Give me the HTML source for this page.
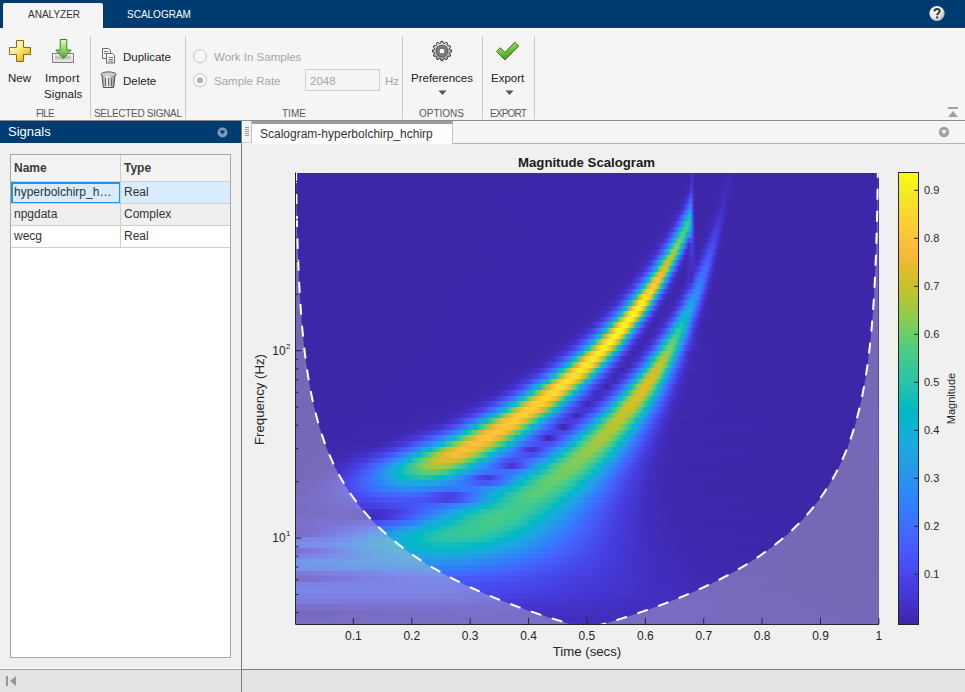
<!DOCTYPE html>
<html><head><meta charset="utf-8">
<style>
*{box-sizing:border-box;margin:0;padding:0}
html,body{width:965px;height:692px;overflow:hidden;background:#f0f0f0;font-family:"Liberation Sans",sans-serif;color:#333}
.a{position:absolute;white-space:nowrap}
.tt{font-size:10px;line-height:10px;letter-spacing:0}
.lbl{font-size:11.5px;line-height:12px;color:#222}
.sec{font-size:10px;line-height:10px;color:#5a5a5a}
.dis{color:#a6a6a6}
.sep{position:absolute;width:1px;background:#c9c9c9;top:36px;height:83px}
#scal div{position:absolute;left:0;width:583px}
.tk{font-size:12px;line-height:12px;color:#262626}
.cb{font-size:11px;line-height:11px;color:#262626}
.cell{position:absolute;font-size:12px;line-height:12px;color:#333}
</style></head><body>
<!-- top tab bar -->
<div class="a" style="left:0;top:0;width:965px;height:28px;background:#003c71"></div>
<div class="a" style="left:3px;top:3px;width:100px;height:25px;background:#f5f5f5;border-radius:2px 2px 0 0"></div>
<div class="a tt" style="left:28px;top:10px;color:#333">ANALYZER</div>
<div class="a tt" style="left:127px;top:10px;color:#fff">SCALOGRAM</div>
<svg class="a" style="left:928px;top:5px" width="18" height="18" viewBox="0 0 18 18">
<defs><radialGradient id="hg" cx="35%" cy="30%" r="75%"><stop offset="0" stop-color="#fff"/><stop offset="0.6" stop-color="#e8e8e8"/><stop offset="1" stop-color="#b8b8b8"/></radialGradient></defs>
<circle cx="9" cy="8.5" r="7.6" fill="url(#hg)"/>
<path d="M6.4 6.6C6.4 4.9 7.6 4 9 4C10.5 4 11.6 4.9 11.6 6.3C11.6 7.5 10.9 8 10.1 8.5C9.4 8.9 9.1 9.3 9.1 10.3" fill="none" stroke="#333" stroke-width="1.9"/><rect x="8.1" y="11.4" width="2" height="2" fill="#3a3f6a"/>
</svg>

<!-- toolstrip -->
<div class="a" style="left:0;top:28px;width:965px;height:92px;background:#f5f5f5"></div>
<!-- New icon -->
<svg class="a" style="left:8px;top:39px" width="24" height="24" viewBox="0 0 24 24">
<defs><linearGradient id="pg" x1="0.1" y1="0.2" x2="0.8" y2="1"><stop offset="0" stop-color="#fffbe2"/><stop offset="0.35" stop-color="#fbeb8a"/><stop offset="0.7" stop-color="#f2cc3a"/><stop offset="1" stop-color="#d9a21a"/></linearGradient></defs>
<path d="M8.5 1.5h7v7h7v7h-7v7h-7v-7h-7v-7h7z" fill="url(#pg)" stroke="#8f6a1a" stroke-width="1"/>
</svg>
<div class="a lbl" style="left:8px;top:72px">New</div>
<!-- Import icon -->
<svg class="a" style="left:51px;top:38px" width="25" height="26" viewBox="0 0 25 26">
<defs><linearGradient id="ig" x1="0" y1="0" x2="0" y2="1"><stop offset="0" stop-color="#e4f7cc"/><stop offset="0.5" stop-color="#9ad46a"/><stop offset="1" stop-color="#4aa02a"/></linearGradient>
<linearGradient id="tg" x1="0" y1="0" x2="0" y2="1"><stop offset="0" stop-color="#f6f6f6"/><stop offset="1" stop-color="#e0e0e0"/></linearGradient></defs>
<path d="M1.5 15.5h21v9h-21z" fill="url(#tg)" stroke="#7c7c7c"/>
<path d="M4 17.5h16v4h-16z" fill="#c4c4c4"/>
<path d="M9.2 1.5h6.6v10.5h4.4l-7.7 8.6l-7.7-8.6h4.4z" fill="url(#ig)" stroke="#3b8a22" stroke-width="1"/>
</svg>
<div class="a lbl" style="left:45px;top:72px;letter-spacing:.35px">Import</div>
<div class="a lbl" style="left:44px;top:88px;letter-spacing:.1px">Signals</div>
<div class="a sec" style="left:36px;top:109px;letter-spacing:-.8px">FILE</div>
<div class="sep" style="left:90px"></div>
<!-- Duplicate icon -->
<svg class="a" style="left:101px;top:47px" width="15" height="17" viewBox="0 0 15 17">
<path d="M1.5 1.5h6l2 2v8h-8z" fill="#f4f4f4" stroke="#6a6a6a"/>
<path d="M5.5 6.5h6l2 2v7.5h-8z" fill="#f8f8f8" stroke="#6a6a6a"/>
<path d="M3 4.5h4M3 6.5h2M7.5 10.5h4.5M7.5 12.5h4.5M7.5 14.2h4.5" stroke="#7a7a7a" stroke-width="1"/>
</svg>
<div class="a lbl" style="left:123px;top:51px">Duplicate</div>
<!-- Delete icon -->
<svg class="a" style="left:100px;top:71px" width="17" height="18" viewBox="0 0 17 18">
<defs><linearGradient id="dg" x1="0" y1="0" x2="1" y2="0"><stop offset="0" stop-color="#9a9a9a"/><stop offset="0.4" stop-color="#f2f2f2"/><stop offset="1" stop-color="#8a8a8a"/></linearGradient></defs>
<ellipse cx="8.5" cy="3.5" rx="7.5" ry="2.6" fill="#d0d0d0" stroke="#555"/>
<path d="M2 4.5l1.3 12h10.4l1.3-12" fill="url(#dg)" stroke="#555"/>
<path d="M5.5 7v8M8.5 7v8M11.5 7v8" stroke="#666" stroke-width="1"/>
</svg>
<div class="a lbl" style="left:123px;top:75px">Delete</div>
<div class="a sec" style="left:94px;top:109px;letter-spacing:-.3px">SELECTED SIGNAL</div>
<div class="sep" style="left:185px"></div>
<!-- TIME section -->
<svg class="a" style="left:192px;top:48px" width="16" height="40" viewBox="0 0 16 40">
<circle cx="8" cy="8.2" r="6.5" fill="#f8f8f8" stroke="#c4c4c4"/>
<circle cx="8" cy="32.2" r="6.5" fill="#f8f8f8" stroke="#c4c4c4"/>
<circle cx="8" cy="32.2" r="3" fill="#b0b0b0"/>
</svg>
<div class="a lbl dis" style="left:214px;top:51px">Work In Samples</div>
<div class="a lbl dis" style="left:214px;top:75px">Sample Rate</div>
<div class="a" style="left:305px;top:69px;width:75px;height:22px;border:1px solid #cfcfcf;background:#f5f5f5"></div>
<div class="a lbl dis" style="left:310px;top:75px">2048</div>
<div class="a lbl dis" style="left:385px;top:75px">Hz</div>
<div class="a sec" style="left:282px;top:109px">TIME</div>
<div class="sep" style="left:402px"></div>
<!-- Preferences -->
<svg class="a" style="left:431px;top:40px" width="22" height="22" viewBox="0 0 22 22">
<defs><radialGradient id="gg" cx="50%" cy="50%" r="50%"><stop offset="0.35" stop-color="#2e2e2e"/><stop offset="0.65" stop-color="#8a8a8a"/><stop offset="1" stop-color="#505050"/></radialGradient>
<linearGradient id="gb" x1="0" y1="0" x2="0" y2="1"><stop offset="0" stop-color="#e6e6e6"/><stop offset="1" stop-color="#9c9c9c"/></linearGradient></defs>
<g transform="translate(11 11)">
<path d="M9.55 -1.00 L9.55 1.00 L7.89 1.33 L7.50 2.79 L8.77 3.90 L7.77 5.64 L6.16 5.10 L5.10 6.16 L5.64 7.77 L3.90 8.77 L2.79 7.50 L1.33 7.89 L1.00 9.55 L-1.00 9.55 L-1.33 7.89 L-2.79 7.50 L-3.90 8.77 L-5.64 7.77 L-5.10 6.16 L-6.16 5.10 L-7.77 5.64 L-8.77 3.90 L-7.50 2.79 L-7.89 1.33 L-9.55 1.00 L-9.55 -1.00 L-7.89 -1.33 L-7.50 -2.79 L-8.77 -3.90 L-7.77 -5.64 L-6.16 -5.10 L-5.10 -6.16 L-5.64 -7.77 L-3.90 -8.77 L-2.79 -7.50 L-1.33 -7.89 L-1.00 -9.55 L1.00 -9.55 L1.33 -7.89 L2.79 -7.50 L3.90 -8.77 L5.64 -7.77 L5.10 -6.16 L6.16 -5.10 L7.77 -5.64 L8.77 -3.90 L7.50 -2.79 L7.89 -1.33Z" fill="url(#gb)" stroke="#333" stroke-width="1"/>
<circle r="6.3" fill="url(#gg)"/>
<circle r="2.6" fill="#f6f6f6"/>
</g></svg>
<div class="a lbl" style="left:411px;top:72px">Preferences</div>
<svg class="a" style="left:438px;top:90px" width="9" height="6" viewBox="0 0 9 6"><path d="M0.5 0.5h8l-4 4.5z" fill="#555"/></svg>
<div class="a sec" style="left:419px;top:109px">OPTIONS</div>
<div class="sep" style="left:482px"></div>
<!-- Export -->
<svg class="a" style="left:495px;top:40px" width="26" height="22" viewBox="0 0 26 22">
<defs><linearGradient id="cg" x1="0" y1="0" x2="0.4" y2="1"><stop offset="0" stop-color="#c4eb98"/><stop offset="0.5" stop-color="#7cc747"/><stop offset="1" stop-color="#3f9a1c"/></linearGradient></defs>
<path d="M1.5 11.5l3.8-3.8 4.7 4.7 9.8-10.2 4 3.8-13.8 14z" fill="url(#cg)" stroke="#2e6b18" stroke-width="0.9" stroke-linejoin="round"/>
</svg>
<div class="a lbl" style="left:491px;top:72px">Export</div>
<svg class="a" style="left:505px;top:90px" width="9" height="6" viewBox="0 0 9 6"><path d="M0.5 0.5h8l-4 4.5z" fill="#555"/></svg>
<div class="a sec" style="left:490px;top:109px;letter-spacing:-.8px">EXPORT</div>
<div class="sep" style="left:534px"></div>
<!-- collapse -->
<svg class="a" style="left:947px;top:106px" width="12" height="12" viewBox="0 0 12 12"><rect x="1" y="1" width="10" height="2" fill="#a0a0a0"/><path d="M1 11h10l-5-6z" fill="#a0a0a0"/></svg>
<div class="a" style="left:0;top:120px;width:965px;height:1px;background:#8c8c8c"></div>

<!-- left panel -->
<div class="a" style="left:0;top:121px;width:241px;height:22px;background:#003c71"></div>
<div class="a" style="left:8px;top:125px;font-size:13px;line-height:14px;color:#fff">Signals</div>
<svg class="a" style="left:217px;top:127px" width="11" height="11" viewBox="0 0 11 11"><circle cx="5.5" cy="5.5" r="5" fill="#7f9cba"/><path d="M2.7 3.5h5.6l-2.8 4.2z" fill="#003c71"/></svg>
<!-- table -->
<div class="a" style="left:10px;top:154px;width:221px;height:504px;background:#fff;border:1px solid #a8a8a8"></div>
<div class="a" style="left:11px;top:155px;width:219px;height:26px;background:#f3f3f3"></div>
<div class="a" style="left:11px;top:181px;width:219px;height:1px;background:#cfcfcf"></div>
<div class="a" style="left:11px;top:182px;width:219px;height:21px;background:#d9ecfb"></div>
<div class="a" style="left:11px;top:182px;width:110px;height:22px;border:2px solid #2391ee"></div>
<div class="a" style="left:11px;top:203px;width:219px;height:1px;background:#cfcfcf"></div>
<div class="a" style="left:11px;top:204px;width:219px;height:21px;background:#efefef"></div>
<div class="a" style="left:11px;top:225px;width:219px;height:1px;background:#cfcfcf"></div>
<div class="a" style="left:11px;top:247px;width:219px;height:1px;background:#cfcfcf"></div>
<div class="a" style="left:120px;top:155px;width:1px;height:92px;background:#cfcfcf"></div>
<div class="cell" style="left:14px;top:162px;font-weight:bold;color:#3a3a3a">Name</div>
<div class="cell" style="left:124px;top:162px;font-weight:bold;color:#3a3a3a">Type</div>
<div class="cell" style="left:14px;top:186px">hyperbolchirp_h…</div>
<div class="cell" style="left:124px;top:186px">Real</div>
<div class="cell" style="left:14px;top:208px">npgdata</div>
<div class="cell" style="left:124px;top:208px">Complex</div>
<div class="cell" style="left:14px;top:230px">wecg</div>
<div class="cell" style="left:124px;top:230px">Real</div>
<div class="a" style="left:241px;top:121px;width:1px;height:571px;background:#7a7a7a"></div>

<!-- doc tab bar -->
<div class="a" style="left:242px;top:121px;width:723px;height:22px;background:#f5f5f5"></div>
<div class="a" style="left:242px;top:121px;width:10px;height:22px;background:#f2f2f2;border-left:1px solid #fff;border-right:1px solid #c2c2c2;border-bottom:1px solid #d0d0d0"></div>
<svg class="a" style="left:244px;top:126px" width="6" height="11" viewBox="0 0 6 11"><path d="M1 1.5h4M1 3.5h4M1 5.5h4M1 7.5h4M1 9.5h4" stroke="#9a9a9a" stroke-width="1"/></svg>
<div class="a" style="left:252px;top:121px;width:201px;height:23px;background:#fdfdfd;border-top:3px solid #9c9c9c;border-right:1px solid #c4c4c4"></div>
<div class="a" style="left:260px;top:128px;font-size:12px;line-height:12px;color:#333">Scalogram-hyperbolchirp_hchirp</div>
<div class="a" style="left:453px;top:143px;width:512px;height:1px;background:#b4b4b4"></div>
<svg class="a" style="left:938px;top:126px" width="12" height="12" viewBox="0 0 12 12"><circle cx="6" cy="6" r="5.2" fill="#a2a2a2"/><path d="M3 4.2h6l-3 4z" fill="#f5f5f5"/></svg>

<!-- plot -->
<div class="a" style="left:518px;top:156px;font-size:13.2px;line-height:14px;font-weight:bold;color:#1a1a1a">Magnitude Scalogram</div>
<div class="a" id="scal" style="left:296px;top:173px;width:583px;height:451px;background:#3e26a8;overflow:hidden">
<div style="top:0px;height:3px;background:linear-gradient(90deg,#3e26a8 0,#3e27a9 394px,#412dbc 395px,#4332c8 396px,#402bb6 397px,#3e27aa 398px,#3e27ab 429px,#402ab4 434px,#3e27a9 438px,#3e26a8 582px)"></div>
<div style="top:3px;height:5px;background:linear-gradient(90deg,#3e26a8 0,#3e27ab 394px,#4331c6 395px,#4435d1 396px,#402cb8 397px,#3e27a9 398px,#3e27aa 427px,#402bb6 433px,#3e26a9 438px,#3e26a8 582px)"></div>
<div style="top:8px;height:6px;background:linear-gradient(90deg,#3e26a8 0,#3e27aa 390px,#3f28ae 393px,#402ab3 394px,#4537d5 395px,#463ada 396px,#412dbc 397px,#3e27ab 398px,#3e27aa 425px,#402bb8 432px,#3e27a9 437px,#3e26a8 582px)"></div>
<div style="top:14px;height:6px;background:linear-gradient(90deg,#3e26a8 0,#3e27ab 388px,#402bb8 393px,#4331c7 394px,#4742e6 395px,#4740e4 396px,#422fc1 397px,#3e27ac 398px,#3e26a8 402px,#3e27ab 424px,#412cbb 431px,#3e27aa 436px,#3e26a8 582px)"></div>
<div style="top:20px;height:5px;background:linear-gradient(90deg,#3e26a8 0,#3e27ab 385px,#402ab3 389px,#4330c5 392px,#4434cf 393px,#4741e6 394px,#4854f5 395px,#484aed 396px,#4332c8 397px,#3f28ae 398px,#3e26a8 400px,#3e27ab 422px,#422ebe 429px,#402ab5 432px,#3e27aa 435px,#3e26a8 582px)"></div>
<div style="top:25px;height:6px;background:linear-gradient(90deg,#3e26a8 0,#3e27ab 382px,#402bb6 387px,#4433cc 390px,#4740e4 392px,#484cf0 393px,#4660fb 394px,#416bfe 395px,#4855f6 396px,#4435d1 397px,#3f29b1 398px,#3e27a9 399px,#3e27aa 420px,#412cb9 425px,#4230c3 428px,#402bb6 431px,#3e27aa 434px,#3e26a8 582px)"></div>
<div style="top:31px;height:6px;background:linear-gradient(90deg,#3e26a8 0,#3e27ab 379px,#402bb6 384px,#4332ca 387px,#463ee1 389px,#4854f5 391px,#4563fd 392px,#3677fe 393px,#2d89f5 394px,#2e86f7 395px,#4661fc 396px,#463ada 397px,#402ab5 398px,#3e27aa 399px,#3e27aa 418px,#402ab5 422px,#4331c7 426px,#4330c4 428px,#3e28ac 432px,#3e26a8 439px,#3e26a8 582px)"></div>
<div style="top:37px;height:5px;background:linear-gradient(90deg,#3e26a8 0,#3e27ab 376px,#402bb6 381px,#4332c9 384px,#463ddf 386px,#465ffb 389px,#3d71ff 390px,#2e84f8 391px,#1ea7e1 393px,#19acdc 394px,#259be8 395px,#406dfe 396px,#473fe3 397px,#412cb9 398px,#3e27ab 399px,#3e27aa 415px,#3f29b1 419px,#4433cd 425px,#4331c8 427px,#3e28ad 431px,#3e26a8 437px,#3e26a8 582px)"></div>
<div style="top:42px;height:6px;background:linear-gradient(90deg,#3e26a8 0,#3e27aa 372px,#402ab3 377px,#422fc1 380px,#463ddf 383px,#465efb 386px,#3f6eff 387px,#2f82fa 388px,#1fa6e2 390px,#0ab4d1 391px,#0abdbd 392px,#1fc0b2 393px,#0bbdbd 394px,#1ea8e0 395px,#3876fe 396px,#4745e9 397px,#422ebf 398px,#3f28ad 399px,#3e26a8 402px,#3e27ac 415px,#412cba 419px,#4536d3 423px,#4435d1 425px,#3f28ad 430px,#3e26a8 436px,#3e26a8 582px)"></div>
<div style="top:48px;height:6px;background:linear-gradient(90deg,#3e26a8 0,#3e27ab 369px,#402ab4 374px,#4230c3 377px,#463de0 380px,#465efb 383px,#3f6eff 384px,#2f81fa 385px,#20a5e2 387px,#0bb3d2 388px,#0cbdbc 389px,#2bc3a8 390px,#36c899 391px,#3ac993 392px,#33c69d 393px,#13beb9 394px,#1ea7e1 395px,#3678fd 396px,#4848ec 397px,#4330c4 398px,#3f28af 399px,#3e26a8 401px,#3e27ac 413px,#412cbb 417px,#4538d7 421px,#4639da 423px,#4433cd 425px,#3f29b2 428px,#3e27a9 431px,#3e26a8 582px)"></div>
<div style="top:54px;height:5px;background:linear-gradient(90deg,#3e26a8 0,#3e27aa 365px,#402ab5 371px,#4330c5 374px,#473fe2 377px,#4660fb 380px,#3d70ff 381px,#2f83f9 382px,#1fa6e2 384px,#08b4d1 385px,#11beba 386px,#2ec5a4 387px,#3cc991 388px,#48cb86 389px,#47cb87 390px,#39c895 391px,#28c3aa 392px,#05bbc1 393px,#15afd9 394px,#2798ea 395px,#3d70ff 396px,#4849ed 397px,#4332c9 398px,#3f29b2 399px,#3e27aa 400px,#3e27ab 410px,#402bb6 414px,#463ddf 420px,#463cdf 422px,#4434cf 424px,#3f29b2 427px,#3e27a9 430px,#3e26a8 582px)"></div>
<div style="top:59px;height:6px;background:linear-gradient(90deg,#3e26a8 0,#3e27ab 362px,#402bb7 368px,#4332c9 371px,#4742e6 374px,#4563fd 377px,#3a74fe 378px,#2e86f7 379px,#1da9e0 381px,#03b7cc 382px,#33c69d 384px,#47cb87 385px,#59cc78 386px,#5ccc75 387px,#4ecc81 388px,#1bc0b4 390px,#0ab4d2 391px,#23a0e5 392px,#2c8ef1 393px,#2e83f9 394px,#3677fe 395px,#4561fc 396px,#4746ea 397px,#4433cb 398px,#402ab4 399px,#3e27ab 400px,#3e27aa 407px,#3f29b2 411px,#4330c5 414px,#463cdf 417px,#4742e7 419px,#473fe2 421px,#4435d0 423px,#412cb9 425px,#3f28ad 427px,#3e26a8 434px,#3e26a8 582px)"></div>
<div style="top:65px;height:5px;background:linear-gradient(90deg,#3e26a8 0,#3e27ab 358px,#402bb6 364px,#4330c5 367px,#463de0 370px,#475bf9 373px,#4269fe 374px,#347afd 375px,#249de6 377px,#18addb 378px,#02bac5 379px,#26c2ac 380px,#3bc993 381px,#57cc7a 382px,#6dcd68 383px,#73cd62 384px,#68cd6b 385px,#4dcb82 386px,#31c6a0 387px,#08bcbf 388px,#19acdc 389px,#3479fd 391px,#465dfa 392px,#484aee 393px,#484bef 394px,#4853f4 395px,#484ff2 396px,#4740e4 397px,#4432cb 398px,#402bb6 399px,#3e28ad 400px,#3e27a9 403px,#3f29b0 408px,#422ebf 411px,#473fe2 415px,#4747eb 417px,#4746ea 419px,#463bdc 421px,#412cb8 424px,#3e28ad 426px,#3e26a8 434px,#3e26a8 582px)"></div>
<div style="top:70px;height:6px;background:linear-gradient(90deg,#3e26a8 0,#3e27ab 354px,#402ab5 360px,#4230c3 363px,#463bdd 366px,#4755f6 369px,#4561fc 370px,#3d71ff 371px,#2f82f9 372px,#20a4e3 374px,#0cb3d2 375px,#0fbeba 376px,#31c6a0 377px,#4bcb84 378px,#6ccd68 379px,#85cb56 380px,#8dcb4f 381px,#84cc56 382px,#68cd6c 383px,#41ca8c 384px,#05b6ce 386px,#22a1e4 387px,#2d89f6 388px,#3f6efe 389px,#4757f7 390px,#4745ea 391px,#4537d5 392px,#402ab4 393px,#4330c5 394px,#463cdf 395px,#4740e3 396px,#463adb 397px,#402bb7 399px,#3e27aa 401px,#3f29b1 406px,#422fc1 409px,#4742e6 413px,#484ef1 416px,#4849ed 418px,#463adc 420px,#402bb7 423px,#3e27aa 426px,#3e26a8 582px)"></div>
<div style="top:76px;height:6px;background:linear-gradient(90deg,#3e26a8 0,#3e27ab 350px,#402ab5 356px,#4332c9 360px,#4740e3 363px,#475dfa 366px,#426afe 367px,#337bfc 368px,#259de7 370px,#19addc 371px,#01b9c6 372px,#27c2ac 373px,#3eca8f 374px,#88cb53 376px,#9fc941 377px,#a7c73c 378px,#9ec942 379px,#83cc57 380px,#59cc78 381px,#33c69e 382px,#07bcc0 383px,#1aabdd 384px,#347afd 386px,#4561fc 387px,#463ee1 389px,#4434cf 390px,#4230c3 391px,#422fc0 392px,#422fc3 393px,#4537d5 395px,#4539d9 396px,#4536d3 397px,#402bb7 399px,#3f29b0 400px,#3f28af 403px,#412dbd 406px,#473fe2 410px,#4852f4 413px,#4854f5 415px,#484aee 417px,#463ada 419px,#422ec0 421px,#3f29b0 423px,#3e26a9 427px,#3e26a8 582px)"></div>
<div style="top:82px;height:5px;background:linear-gradient(90deg,#3e26a8 0,#3e27aa 345px,#402ab5 352px,#4332c8 356px,#473fe2 359px,#475af9 362px,#4367fd 363px,#3776fe 364px,#2e87f7 365px,#1da8e0 367px,#05b6ce 368px,#1bc0b4 369px,#36c898 370px,#5bcc76 371px,#86cb55 372px,#a7c73c 373px,#bbc430 374px,#c0c32d 375px,#b7c532 376px,#9dc943 377px,#71cd65 378px,#3fca8e 379px,#1cc0b3 380px,#0eb2d4 381px,#259de7 382px,#2e84f8 383px,#426afe 384px,#4755f6 385px,#4538d8 387px,#412dbc 389px,#3e27aa 391px,#4332c9 394px,#4535d2 396px,#4434ce 397px,#3e27ac 400px,#422ec0 404px,#463bdd 407px,#4851f4 410px,#475bf9 412px,#4758f8 414px,#484aee 416px,#4538d8 418px,#412ebd 420px,#3f28af 422px,#3e26a9 426px,#3e26a8 582px)"></div>
<div style="top:87px;height:6px;background:linear-gradient(90deg,#3e26a8 0,#3e27ab 341px,#402ab5 348px,#4332c9 352px,#473ee2 355px,#4759f8 358px,#4465fd 359px,#3a74fe 360px,#2e84f8 361px,#20a5e2 363px,#0bb3d2 364px,#11beba 365px,#33c69e 366px,#55cc7c 367px,#83cc57 368px,#acc739 369px,#c7c12a 370px,#d5be28 371px,#d7be28 372px,#ccc028 373px,#b2c635 374px,#86cb55 375px,#4fcc81 376px,#29c3a9 377px,#03b7cc 378px,#21a3e3 379px,#2d8bf4 380px,#3c72ff 381px,#475bfa 382px,#463cdf 384px,#422fc0 386px,#3f29b1 388px,#3f28ad 390px,#402ab5 392px,#4332ca 395px,#4433cc 397px,#4331c7 398px,#402ab4 400px,#4230c4 402px,#473fe3 405px,#4757f7 408px,#4562fc 410px,#4660fc 412px,#4852f4 414px,#473ee2 416px,#412dbb 419px,#3e27ab 422px,#3e26a8 458px,#3e26a8 582px)"></div>
<div style="top:93px;height:6px;background:linear-gradient(90deg,#3e26a8 0,#3e27ab 337px,#402bb6 344px,#4332ca 348px,#473fe3 351px,#4759f8 354px,#4465fd 355px,#3a74fe 356px,#2e84f9 357px,#21a4e3 359px,#0eb2d4 360px,#0cbdbc 361px,#31c6a0 362px,#53cc7d 363px,#84cc56 364px,#b0c636 365px,#d0bf27 366px,#e3bb2c 367px,#ecba32 368px,#eaba31 369px,#ddbd29 370px,#c3c22b 371px,#96ca49 372px,#5bcc76 373px,#2fc5a2 374px,#01b9c6 375px,#1ea7e1 376px,#3677fe 378px,#4660fc 379px,#4740e4 381px,#4330c5 383px,#402ab3 385px,#3e27ab 388px,#3e27aa 390px,#422fc2 394px,#4230c3 396px,#4434cf 398px,#4434cf 400px,#463cde 402px,#4756f6 405px,#4269fe 408px,#4369fe 410px,#475af9 412px,#4746ea 414px,#4434d0 416px,#412cb9 418px,#3e27ab 421px,#3e26a8 582px)"></div>
<div style="top:99px;height:5px;background:linear-gradient(90deg,#3e26a8 0,#3e27ab 332px,#402ab5 339px,#4331c6 343px,#4741e5 347px,#475bf9 350px,#4367fd 351px,#3875fe 352px,#2e85f8 353px,#20a5e3 355px,#0cb3d3 356px,#0fbebb 357px,#32c69f 358px,#56cc7b 359px,#89cb53 360px,#b7c532 361px,#d9bd28 362px,#efba35 363px,#fabb3d 364px,#fcbd3d 365px,#f9ba3d 366px,#eaba31 367px,#cec028 368px,#a0c941 369px,#62cd71 370px,#32c69f 371px,#02bac3 372px,#1ca9e0 373px,#337afd 375px,#4563fd 376px,#4743e7 378px,#4332c9 380px,#402bb6 382px,#3e27ab 385px,#3e27a9 389px,#422fc0 393px,#422ebf 394px,#402bb6 395px,#402bb6 396px,#4639da 398px,#4746eb 400px,#4466fd 404px,#3b72fe 406px,#3c71ff 408px,#4758f8 411px,#4742e6 413px,#4332cb 415px,#402bb6 417px,#3e27ab 420px,#3e26a8 582px)"></div>
<div style="top:104px;height:6px;background:linear-gradient(90deg,#3e26a8 0,#3e27ab 327px,#402ab4 334px,#4230c3 338px,#463de0 342px,#4854f5 345px,#416afe 347px,#3479fd 348px,#1ea7e1 351px,#07b5cf 352px,#17bfb6 353px,#35c79a 354px,#5ecc74 355px,#93ca4b 356px,#c2c32c 357px,#e4bb2c 358px,#f9bb3d 359px,#fec339 360px,#fec735 361px,#fec736 362px,#fec03b 363px,#f2ba38 364px,#d3bf27 365px,#a2c83f 366px,#62cd71 367px,#31c6a0 368px,#02bac4 369px,#1da9e0 370px,#2a93ee 371px,#327bfc 372px,#4465fd 373px,#4744e9 375px,#4433cc 377px,#402bb7 379px,#3e27ab 382px,#3e27ac 388px,#402ab4 390px,#4230c4 392px,#4331c8 393px,#412ebe 395px,#4230c3 396px,#4746ea 398px,#465efb 400px,#3578fd 403px,#317efb 405px,#3974fe 407px,#4660fb 409px,#4848ec 411px,#4536d3 413px,#412dbb 415px,#3e27ac 418px,#3e26a8 432px,#3e26a8 582px)"></div>
<div style="top:110px;height:6px;background:linear-gradient(90deg,#3e26a8 0,#3e27ab 322px,#402ab5 330px,#4331c6 334px,#4740e4 338px,#4758f8 341px,#3e70ff 343px,#307ffb 344px,#259de7 346px,#1aacdd 347px,#01b8c9 348px,#23c1af 349px,#3dc990 350px,#6ccd69 351px,#a2c840 352px,#cfc028 353px,#efba35 354px,#fec13a 355px,#fbd32e 357px,#fad42e 358px,#fccf30 359px,#fec537 360px,#f4ba3a 361px,#d2bf27 362px,#9cc944 363px,#5acc77 364px,#2ec4a5 365px,#01b9c8 366px,#1ea7e1 367px,#347afd 369px,#4464fd 370px,#4745e9 372px,#4434cd 374px,#412cb9 376px,#3e27aa 380px,#3f28af 386px,#412cba 389px,#4537d7 392px,#4740e3 395px,#4851f4 397px,#406cfe 399px,#3579fd 400px,#2f81fa 401px,#2e87f7 403px,#317efb 405px,#4367fd 407px,#484ff1 409px,#463adb 411px,#422fc1 413px,#3f28ae 416px,#3e26a8 423px,#3e26a8 582px)"></div>
<div style="top:116px;height:5px;background:linear-gradient(90deg,#3e26a8 0,#3e27ab 317px,#402ab5 325px,#4230c4 329px,#463ee0 333px,#465dfb 337px,#4269fe 338px,#3777fe 339px,#2994ed 341px,#21a3e3 342px,#11b1d6 343px,#07bcbf 344px,#2ec4a5 345px,#4ccb83 346px,#80cc59 347px,#b5c533 348px,#debc2a 349px,#fabb3d 350px,#fec934 351px,#f6de29 353px,#f6e028 354px,#f7dd2a 355px,#fbd42e 356px,#fec537 357px,#f1ba36 358px,#c8c129 359px,#8dcb50 360px,#4bcb84 361px,#25c2ae 362px,#06b5cf 363px,#22a2e4 364px,#3776fe 366px,#4562fc 367px,#4744e8 369px,#4434ce 371px,#412cba 373px,#3e27aa 377px,#3f28af 383px,#422ebf 387px,#463cde 390px,#4852f4 393px,#426afe 396px,#307ffb 398px,#2d8cf3 400px,#2d8bf4 402px,#327bfc 404px,#3f6fff 405px,#4855f6 407px,#4536d4 410px,#412dbd 412px,#3f28ad 415px,#3e26a8 424px,#3e26a8 582px)"></div>
<div style="top:121px;height:6px;background:linear-gradient(90deg,#3e26a8 0,#3e27ab 312px,#402ab5 320px,#4332c9 325px,#4742e6 329px,#4464fd 333px,#3d71ff 334px,#307ffb 335px,#259ce7 337px,#1babde 338px,#02b7cb 339px,#38c896 341px,#63cd70 342px,#99c946 343px,#cac129 344px,#eeba34 345px,#fec338 346px,#f6e029 348px,#f5e825 349px,#f5ea23 350px,#f5e825 351px,#f6e028 352px,#fbd22f 353px,#fec03a 354px,#e5bb2d 355px,#b4c534 356px,#72cd63 357px,#39c895 358px,#0fbeba 359px,#15afd8 360px,#259ce7 361px,#2e87f7 362px,#3d71ff 363px,#465efb 364px,#4743e7 366px,#4433cd 368px,#412cba 370px,#3e27aa 374px,#3f29b0 380px,#422fc0 384px,#463adc 387px,#4755f6 390px,#426afe 392px,#307ffb 394px,#2b92ee 397px,#2994ed 399px,#2d8bf4 401px,#2f82fa 402px,#3875fe 403px,#4367fd 404px,#484ef1 406px,#463ada 408px,#422fc2 410px,#3f28af 413px,#3e26a9 419px,#3e26a8 582px)"></div>
<div style="top:127px;height:6px;background:linear-gradient(90deg,#3e26a8 0,#3e27ab 307px,#402bb6 315px,#4332ca 320px,#4741e5 324px,#4561fc 328px,#406dfe 329px,#337bfd 330px,#20a5e2 333px,#0eb2d4 334px,#09bcbe 335px,#2ec5a4 336px,#4ccb83 337px,#80cc59 338px,#b4c533 339px,#dfbc2a 340px,#fcbc3d 341px,#fdcd32 342px,#f5e924 344px,#f6f21d 346px,#f6f01f 347px,#f5e924 348px,#feca33 350px,#f5ba3b 351px,#cdc028 352px,#92ca4b 353px,#51cc7f 354px,#2ac3a9 355px,#01b8ca 356px,#1ea7e1 357px,#2a93ee 358px,#307efb 359px,#426afe 360px,#484cef 362px,#4538d8 364px,#412cb9 367px,#3e27aa 371px,#3f29b1 377px,#4230c3 381px,#463cde 384px,#4756f7 387px,#3f6efe 389px,#337bfd 390px,#2797eb 393px,#23a0e5 396px,#2699e9 398px,#327bfc 401px,#406dfe 402px,#4852f4 404px,#4536d3 407px,#412dbd 409px,#3f28ae 412px,#3e26a8 420px,#3e26a8 582px)"></div>
<div style="top:133px;height:5px;background:linear-gradient(90deg,#3e26a8 0,#3e27ab 301px,#402bb7 310px,#4433cb 315px,#4742e6 319px,#4661fc 323px,#416cfe 324px,#3579fd 325px,#22a1e4 328px,#16afd9 329px,#01bac5 330px,#25c2ad 331px,#3dc990 332px,#6acd6a 333px,#a0c941 334px,#cec028 335px,#f1ba37 336px,#fec636 337px,#f5e526 339px,#f8f61a 341px,#f8f818 342px,#f5ee21 344px,#f5e128 345px,#fcd030 346px,#fcbd3d 347px,#dabd28 348px,#a5c83d 349px,#64cd6f 350px,#34c79c 351px,#09bcbe 352px,#16afda 353px,#259ce7 354px,#2d88f6 355px,#3974fe 356px,#4562fc 357px,#463ee0 360px,#422ebf 363px,#3f28ad 367px,#3e27ab 369px,#402bb6 375px,#4331c6 378px,#463ee1 381px,#4759f8 384px,#4464fd 385px,#3c71ff 386px,#307ffb 387px,#249fe6 390px,#1ca9df 392px,#1caadf 394px,#2797ea 397px,#2f80fa 399px,#3c72ff 400px,#4563fd 401px,#4741e5 404px,#422fc2 407px,#3f29b0 410px,#3e26a9 416px,#3e26a8 582px)"></div>
<div style="top:138px;height:6px;background:linear-gradient(90deg,#3e26a8 0,#3e27ab 295px,#402bb6 304px,#4331c8 309px,#4743e7 314px,#4562fc 318px,#406dfe 319px,#2e86f7 321px,#23a0e5 323px,#18addb 324px,#01b8c9 325px,#37c898 327px,#5dcc75 328px,#90ca4d 329px,#c0c32d 330px,#e6bb2d 331px,#febf3c 332px,#f6e028 334px,#f7f51b 336px,#f9fa15 338px,#f5ef20 340px,#f5e227 341px,#fcd12f 342px,#fdbd3d 343px,#debd29 344px,#acc738 345px,#6dcd67 346px,#39c895 347px,#16bfb7 348px,#0db3d3 349px,#22a2e4 350px,#327cfc 352px,#4269fe 353px,#484df1 355px,#4435d0 358px,#412ebd 360px,#3e27aa 365px,#402ab5 371px,#4230c3 374px,#463bdc 377px,#4853f5 380px,#4269fe 382px,#3677fe 383px,#2e85f8 384px,#1fa6e2 387px,#0bb3d2 390px,#0bb4d2 391px,#19addc 393px,#2b90ef 396px,#2e83f9 397px,#3974fe 398px,#4466fd 399px,#4743e8 402px,#4331c6 405px,#3f29b2 408px,#3e27a9 413px,#3e26a8 582px)"></div>
<div style="top:144px;height:5px;background:linear-gradient(90deg,#3e26a8 0,#3e27ab 289px,#402ab5 298px,#4331c6 303px,#4740e4 308px,#475cfa 312px,#3e70ff 314px,#327cfc 315px,#22a2e4 318px,#17aeda 319px,#01b8c8 320px,#36c799 322px,#59cc79 323px,#89cb52 324px,#b8c431 325px,#dfbc2a 326px,#fabb3d 327px,#fdcb33 328px,#f5e825 330px,#f8f818 332px,#f9fa16 334px,#f5eb23 336px,#f6de29 337px,#fdcc32 338px,#fabb3d 339px,#d8be28 340px,#a6c73c 341px,#6acd6a 342px,#39c895 343px,#18bfb6 344px,#09b4d1 345px,#20a4e3 346px,#2a92ee 347px,#2f80fa 348px,#3f6eff 349px,#465ffb 350px,#463ee1 353px,#422fc2 356px,#3e27ab 361px,#402ab4 367px,#4331c8 371px,#473ee1 374px,#4758f8 377px,#4564fd 378px,#3d71ff 379px,#307ffb 380px,#21a3e3 383px,#19addc 384px,#01b8c9 386px,#04bbc1 388px,#01b8ca 390px,#1aabdd 392px,#2e86f8 395px,#3876fe 396px,#4466fd 397px,#4744e8 400px,#4332ca 403px,#402ab5 406px,#3e27ab 410px,#3e26a8 582px)"></div>
<div style="top:149px;height:6px;background:linear-gradient(90deg,#3e26a8 0,#3e27ab 282px,#402bb6 292px,#4332cb 298px,#4744e8 303px,#4660fc 307px,#426afe 308px,#2f81fa 310px,#2699e9 312px,#1fa5e2 313px,#12b1d6 314px,#02bac4 315px,#23c1af 316px,#38c896 317px,#5ccc76 318px,#b8c431 320px,#ddbd29 321px,#f8ba3d 322px,#fec835 323px,#f5e526 325px,#f7f61a 327px,#f9f916 329px,#f5ef20 331px,#f5e427 332px,#fec438 334px,#eeba34 335px,#c8c129 336px,#95ca49 337px,#5ccc75 338px,#34c79c 339px,#10beba 340px,#0db3d3 341px,#21a3e3 342px,#2f82fa 344px,#3d70ff 345px,#4561fc 346px,#4741e4 349px,#4331c6 352px,#3e28ac 357px,#402ab3 363px,#4331c6 367px,#463ddf 370px,#4660fb 374px,#416cfe 375px,#347afd 376px,#1aabdd 380px,#0ab4d2 381px,#01bac5 382px,#1cc0b3 384px,#22c1af 385px,#22c1b0 386px,#1ac0b5 387px,#0abdbd 388px,#01b8c9 389px,#12b1d7 390px,#2699e9 392px,#347afd 394px,#4269fe 395px,#484ef1 397px,#463bdd 399px,#422fc0 402px,#3f29b0 406px,#3e26a9 414px,#3e26a8 582px)"></div>
<div style="top:155px;height:6px;background:linear-gradient(90deg,#3e26a8 0,#3e27ab 276px,#402bb6 286px,#4432cb 292px,#4743e7 297px,#465efb 301px,#3d71ff 303px,#327cfc 304px,#249fe5 307px,#1babde 308px,#07b5cf 309px,#0bbdbc 310px,#2cc4a7 311px,#40ca8d 312px,#67cd6d 313px,#94ca4a 314px,#bec32e 315px,#e0bc2b 316px,#f9bb3d 317px,#fec834 318px,#f5e327 320px,#f7f41c 322px,#f8f818 324px,#f6ef20 326px,#f8d92c 328px,#fec934 329px,#f8ba3d 330px,#d9bd28 331px,#aec637 332px,#79cc5e 333px,#47cb87 334px,#2bc3a8 335px,#03bbc3 336px,#15afd9 337px,#23a0e5 338px,#3080fb 340px,#3e6fff 341px,#4561fc 342px,#4742e6 345px,#4332ca 348px,#3f29b1 352px,#3f29b0 357px,#412dbb 361px,#4537d6 365px,#484aee 368px,#4369fe 371px,#3776fe 372px,#2e84f8 373px,#249ee6 375px,#1caadf 376px,#0cb3d3 377px,#02bac4 378px,#28c2ab 380px,#33c69d 382px,#31c6a0 384px,#2bc3a8 385px,#1dc0b3 386px,#05bbc1 387px,#07b5d0 388px,#1babde 389px,#2c90f0 391px,#2f81fa 392px,#3e70ff 393px,#4661fc 394px,#463ee1 397px,#422ebe 400px,#3f29af 403px,#3e26a8 416px,#3e26a8 582px)"></div>
<div style="top:161px;height:5px;background:linear-gradient(90deg,#3e26a8 0,#3e27ab 269px,#402bb7 280px,#4433cc 286px,#4744e8 291px,#4466fd 296px,#337afd 298px,#259ce7 301px,#1ea7e1 302px,#10b2d5 303px,#02bac4 304px,#20c1b1 305px,#35c79b 306px,#51cc7f 307px,#a4c83e 309px,#cac129 310px,#e8bb2f 311px,#fdbd3d 312px,#fdcb33 313px,#f5e427 315px,#f6f21d 317px,#f7f61a 319px,#f5ee21 321px,#f8d92b 323px,#fdca33 324px,#fbbc3d 325px,#e1bc2b 326px,#bbc42f 327px,#8bcb51 328px,#59cc79 329px,#34c79b 330px,#17bfb6 331px,#05b6ce 332px,#1da9e0 333px,#327bfc 336px,#406cfe 337px,#4854f5 339px,#463bdd 342px,#412dbc 346px,#3f29b2 349px,#3f29b1 354px,#4331c7 359px,#4742e6 363px,#475cfa 366px,#4367fd 367px,#3974fe 368px,#2f82f9 369px,#259ce7 371px,#1da8e0 372px,#02bac4 374px,#1ac0b4 375px,#2dc4a6 376px,#3fca8e 378px,#46cb88 379px,#48cb86 380px,#3bc992 382px,#26c2ad 384px,#0bbdbc 385px,#04b6cd 386px,#19addc 387px,#2a93ed 389px,#2e85f8 390px,#3876fe 391px,#4367fd 392px,#4746ea 395px,#4332ca 398px,#402ab3 401px,#3e27a9 404px,#3e26a8 582px)"></div>
<div style="top:166px;height:6px;background:linear-gradient(90deg,#3e26a8 0,#3e27ab 262px,#402bb7 273px,#4332ca 279px,#4741e4 284px,#465ffb 289px,#3d70ff 291px,#337bfc 292px,#259be8 295px,#1fa6e2 296px,#13b0d8 297px,#01b8c8 298px,#30c5a2 300px,#45cb89 301px,#69cd6a 302px,#93ca4b 303px,#b9c430 304px,#dabd28 305px,#f3ba38 306px,#fec239 307px,#f5e526 310px,#f6f21e 312px,#f7f41c 314px,#f5eb23 316px,#f9d72c 318px,#fec934 319px,#fbbc3d 320px,#e2bc2b 321px,#bfc32d 322px,#93ca4b 323px,#62cd70 324px,#3bc993 325px,#24c1ae 326px,#01b9c6 327px,#16afda 328px,#2a93ee 330px,#2e84f8 331px,#3975fe 332px,#4367fd 333px,#4849ed 336px,#4536d4 339px,#412dbd 342px,#3f28ae 349px,#4332c8 355px,#4743e7 359px,#475cfa 362px,#4367fd 363px,#3974fe 364px,#2f82fa 365px,#259ce7 367px,#1da8e0 368px,#02bac4 370px,#1dc0b3 371px,#2fc5a2 372px,#4ccb83 374px,#5acc77 375px,#63cd70 376px,#65cd6e 377px,#60cd72 378px,#54cc7c 379px,#28c2ab 382px,#0bbdbd 383px,#05b6ce 384px,#1aacdd 385px,#2b91ef 387px,#2e83f9 388px,#3975fe 389px,#4367fd 390px,#4849ed 393px,#4537d5 396px,#412cb9 400px,#3e27ac 405px,#3e26a8 451px,#3e26a8 582px)"></div>
<div style="top:172px;height:6px;background:linear-gradient(90deg,#3e26a8 0,#3e27ab 255px,#402bb7 266px,#4332c9 272px,#4743e7 278px,#4562fc 283px,#3a73fe 285px,#317efb 286px,#259de7 289px,#12b1d7 291px,#01b9c8 292px,#2fc5a3 294px,#41ca8c 295px,#63cd70 296px,#b0c636 298px,#d1bf27 299px,#ebba31 300px,#fdbd3d 301px,#fad52e 303px,#f5ee21 306px,#f6f11e 309px,#f5e725 311px,#fec636 314px,#f8ba3d 315px,#dfbc2a 316px,#bdc32e 317px,#93ca4b 318px,#64cd6e 319px,#3dca90 320px,#28c3ab 321px,#05bbc1 322px,#10b2d5 323px,#1fa5e2 324px,#327cfc 327px,#3f6eff 328px,#4758f8 330px,#4639da 334px,#4230c3 337px,#3e27ac 343px,#3f29b0 345px,#4332cb 351px,#4745e9 355px,#465efb 358px,#4269fe 359px,#3876fe 360px,#2e83f9 361px,#259de7 363px,#1da9e0 364px,#0cb3d3 365px,#03bbc2 366px,#20c1b1 367px,#41ca8c 369px,#6acd6a 371px,#79cc5e 372px,#82cc58 373px,#84cc57 374px,#7ecc5b 375px,#70cd65 376px,#48cb86 378px,#26c2ad 380px,#07bcbf 381px,#0ab4d1 382px,#1da9e0 383px,#2c8ef2 385px,#307ffb 386px,#3d70ff 387px,#4563fc 388px,#4745e9 391px,#4435d1 394px,#412dbd 398px,#3e28ac 406px,#3e26a8 437px,#3e26a8 582px)"></div>
<div style="top:178px;height:5px;background:linear-gradient(90deg,#3e26a8 0,#3e27ab 247px,#402bb7 259px,#4434ce 266px,#4747eb 272px,#4366fd 277px,#3579fd 279px,#1baade 284px,#02bac4 286px,#1dc0b3 287px,#44cb89 289px,#65cd6e 290px,#aec637 292px,#cec028 293px,#e7bb2e 294px,#fabb3d 295px,#fec636 296px,#f5e427 299px,#f6f01f 302px,#f5e924 305px,#fdcd32 308px,#fec03b 309px,#f0ba36 310px,#d6be28 311px,#b4c534 312px,#5fcd73 314px,#3cc992 315px,#28c2ab 316px,#06bcc0 317px,#0db3d3 318px,#1ea7e1 319px,#2c8ef2 321px,#2f81fa 322px,#3a73fe 323px,#4367fd 324px,#4743e7 328px,#4332ca 332px,#3e27ab 338px,#4331c7 346px,#4741e5 350px,#4561fc 354px,#406cfe 355px,#2e86f8 357px,#249fe6 359px,#1baade 360px,#08b4d1 361px,#07bcc0 362px,#25c2ae 363px,#48cb86 365px,#79cc5f 367px,#8ccb50 368px,#99c946 369px,#9fc941 370px,#a0c941 371px,#99c946 372px,#8ccb50 373px,#60cd73 375px,#46cb88 376px,#20c1b1 378px,#02bac4 379px,#10b2d5 380px,#1fa6e2 381px,#317dfc 384px,#3f6eff 385px,#4756f7 387px,#463bdd 390px,#422fc0 393px,#402ab3 396px,#3e26a8 418px,#3e26a8 582px)"></div>
<div style="top:183px;height:6px;background:linear-gradient(90deg,#3e26a8 0,#3e27ab 239px,#402bb6 251px,#4332cb 258px,#4743e7 264px,#4465fd 270px,#3776fe 272px,#3080fa 273px,#259ce7 276px,#15afd9 278px,#03b7cc 279px,#0bbdbd 280px,#27c2ac 281px,#36c899 282px,#4dcc82 283px,#92ca4c 285px,#b3c534 286px,#d1bf27 287px,#e8bb2f 288px,#fabb3d 289px,#fec537 290px,#f5e128 293px,#f5ee21 296px,#f5e825 299px,#fcd030 302px,#fec437 303px,#f8ba3d 304px,#e4bb2c 305px,#c7c129 306px,#a4c83e 307px,#54cc7c 309px,#36c898 310px,#24c1af 311px,#03bbc3 312px,#0fb2d4 313px,#1ea7e1 314px,#2c8ff1 316px,#2f83f9 317px,#3876fe 318px,#426afe 319px,#484ef1 322px,#4537d6 326px,#412cbb 330px,#402ab4 333px,#412dbc 339px,#4536d3 343px,#484bef 347px,#4465fd 350px,#317dfc 352px,#22a2e4 355px,#19addc 356px,#04b6cd 357px,#0dbdbc 358px,#29c3a9 359px,#38c896 360px,#85cb55 363px,#9ac945 364px,#aac73a 365px,#b4c534 366px,#b8c431 367px,#b6c532 368px,#afc637 369px,#a1c840 370px,#8ecb4e 371px,#59cc78 373px,#3eca8f 374px,#2ec4a4 375px,#01b8ca 377px,#17aeda 378px,#2896eb 380px,#327cfc 382px,#3f6eff 383px,#4758f8 385px,#463adb 389px,#412dbc 393px,#3f28ad 397px,#3e26a8 444px,#3e26a8 582px)"></div>
<div style="top:189px;height:6px;background:linear-gradient(90deg,#3e26a8 0,#3e27ab 231px,#402bb8 244px,#4433cd 251px,#4744e8 257px,#4466fd 263px,#3080fa 266px,#259be8 269px,#19addc 271px,#07b5d0 272px,#04bbc2 273px,#1ec0b2 274px,#41ca8d 276px,#7ecc5a 278px,#a0c841 279px,#bec32e 280px,#d8be28 281px,#edba33 282px,#fcbc3d 283px,#fcd030 285px,#f5e626 288px,#f5ec22 291px,#f5e128 294px,#fec636 297px,#fbbc3d 298px,#eabb30 299px,#d2bf27 300px,#b3c534 301px,#68cd6c 303px,#45cb89 304px,#19bfb5 306px,#01b9c8 307px,#14b0d8 308px,#1fa5e2 309px,#2c8ef1 311px,#2f83f9 312px,#416bfe 314px,#4850f3 317px,#4539d9 321px,#422ec0 325px,#402ab4 332px,#412ebe 335px,#463de0 340px,#4758f8 344px,#416bfe 346px,#2e83f9 348px,#269be8 350px,#1fa6e2 351px,#13b0d7 352px,#01b9c8 353px,#2ec5a4 355px,#3eca8f 356px,#90ca4d 359px,#a6c73c 360px,#b7c532 361px,#c3c22b 362px,#cac129 364px,#c7c12a 365px,#bfc32e 366px,#b1c635 367px,#9ec943 368px,#67cd6c 370px,#4acb84 371px,#24c1ae 373px,#05bbc1 374px,#0bb3d2 375px,#1ca9df 376px,#2b91ef 378px,#2e84f8 379px,#3677fe 380px,#416bfe 381px,#484ef1 384px,#4537d6 388px,#412dbd 393px,#3f28af 401px,#3e26a8 426px,#3e26a8 582px)"></div>
<div style="top:195px;height:5px;background:linear-gradient(90deg,#3e26a8 0,#3e27ab 222px,#402bb6 235px,#4433cc 243px,#4743e7 249px,#4562fc 255px,#3d71ff 257px,#2f82f9 259px,#20a5e2 263px,#18addb 264px,#07b5d0 265px,#03bbc3 266px,#1bc0b4 267px,#3cc991 269px,#74cc62 271px,#b3c534 273px,#cdc028 274px,#e3bc2c 275px,#f4ba3a 276px,#febf3b 277px,#f8d92b 280px,#f5e825 283px,#f5e725 286px,#f9d72c 289px,#fec537 291px,#fbbc3d 292px,#ebba31 293px,#d5be28 294px,#b9c431 295px,#98ca47 296px,#51cc7f 298px,#37c898 299px,#26c2ac 300px,#09bcbe 301px,#06b5cf 302px,#19acdc 303px,#2d8cf3 306px,#2f81fa 307px,#416bfe 309px,#4851f3 312px,#463adb 316px,#3f28ad 325px,#3e27ac 326px,#463cdf 335px,#4755f6 339px,#4367fd 341px,#317efb 343px,#23a0e5 346px,#1babde 347px,#09b4d1 348px,#05bbc1 349px,#22c1b0 350px,#46cb88 352px,#9ac945 355px,#b0c636 356px,#c1c32c 357px,#d4bf28 359px,#d7be28 361px,#c8c129 363px,#bac430 364px,#a7c73c 365px,#71cd65 367px,#3ac994 369px,#2bc3a8 370px,#0fbeba 371px,#03b7cc 372px,#18aedb 373px,#2797eb 375px,#307efb 377px,#4466fd 379px,#4743e8 383px,#4332c9 387px,#402bb7 391px,#3e27a9 416px,#3e26a8 582px)"></div>
<div style="top:200px;height:6px;background:linear-gradient(90deg,#3e26a8 0,#3e27ab 213px,#402bb7 227px,#4433cd 235px,#4746eb 242px,#4466fd 248px,#317efb 251px,#249fe5 255px,#15afd8 257px,#04b6cd 258px,#06bcc0 259px,#1fc0b2 260px,#3dc990 262px,#72cd63 264px,#aec637 266px,#c8c129 267px,#ddbd29 268px,#efba35 269px,#fcbc3d 270px,#fdcd32 272px,#f6e028 275px,#f5e725 278px,#f6e028 281px,#fdcb33 284px,#fec239 285px,#f8ba3d 286px,#e8bb2f 287px,#d2bf27 288px,#b8c431 289px,#76cc60 291px,#56cc7b 292px,#3bc993 293px,#2cc4a7 294px,#13beb8 295px,#01b8c9 296px,#13b1d7 297px,#259de7 299px,#317efb 302px,#4369fe 304px,#484bef 308px,#4435d1 313px,#402bb8 317px,#402ab4 319px,#4433cc 327px,#4741e5 331px,#4465fd 336px,#3e6fff 337px,#337bfd 338px,#1fa6e1 342px,#14b0d8 343px,#01b8c9 344px,#12beb9 345px,#2bc3a8 346px,#39c895 347px,#6ccd68 349px,#a3c83f 351px,#b8c431 352px,#c8c129 353px,#dcbd29 355px,#e0bc2a 357px,#d7be28 359px,#ccc028 360px,#bdc32e 361px,#a9c73a 362px,#74cd62 364px,#3dc991 366px,#2ec4a5 367px,#01b9c7 369px,#1ea7e1 371px,#2b90ef 373px,#3479fd 375px,#3f6dfe 376px,#475af9 378px,#463ee1 382px,#412ebe 387px,#3e27ab 392px,#3e27ac 407px,#3e26a8 466px,#3e26a8 582px)"></div>
<div style="top:206px;height:5px;background:linear-gradient(90deg,#3e26a8 0,#3e27ab 204px,#402bb7 218px,#4433cb 226px,#4743e8 233px,#4466fd 240px,#317dfc 243px,#20a4e3 248px,#19acdc 249px,#01b9c7 251px,#10beba 252px,#27c2ac 253px,#43ca8a 255px,#95ca49 258px,#b0c636 259px,#c8c129 260px,#dcbd29 261px,#fabb3d 263px,#feca33 265px,#f6e128 269px,#f5e427 272px,#f7db2b 275px,#fec636 278px,#fdbd3d 279px,#f2ba37 280px,#e1bc2b 281px,#cbc029 282px,#b1c635 283px,#73cd63 285px,#54cc7c 286px,#3bc992 287px,#2dc4a6 288px,#01b9c6 290px,#1caadf 292px,#2d8df2 295px,#3479fd 297px,#4466fd 299px,#4744e8 304px,#4332cb 309px,#422fc0 314px,#412ebe 319px,#4433cb 322px,#4848ec 327px,#4465fd 331px,#3479fd 333px,#21a3e3 337px,#19addc 338px,#07b5cf 339px,#06bcc0 340px,#21c1b0 341px,#42ca8c 343px,#93ca4b 346px,#aac73a 347px,#bec32e 348px,#cdc028 349px,#dfbc2a 351px,#e5bb2d 353px,#debc2a 355px,#cac129 357px,#bac430 358px,#a5c83d 359px,#54cc7c 362px,#3cc992 363px,#2ec4a5 364px,#01b9c6 366px,#1da9e0 368px,#2d89f5 371px,#317efb 372px,#4368fe 374px,#4849ed 378px,#4537d5 382px,#412dbd 387px,#3f29b0 395px,#3e26a8 433px,#3e26a8 582px)"></div>
<div style="top:211px;height:6px;background:linear-gradient(90deg,#3e26a8 0,#3e27ab 195px,#402bb7 209px,#4332cb 217px,#4742e6 224px,#4562fc 231px,#3876fe 234px,#2e85f8 236px,#21a4e3 240px,#0fb2d5 242px,#01b8ca 243px,#0abdbe 244px,#21c1b1 245px,#3bc992 247px,#69cd6b 249px,#9fc942 251px,#b8c431 252px,#cdc028 253px,#e0bc2a 254px,#fabc3d 256px,#fec934 258px,#f6de29 262px,#f5e128 265px,#f8d92b 268px,#febf3b 272px,#f6ba3b 273px,#e8bb2e 274px,#d5be28 275px,#bfc32d 276px,#a5c83d 277px,#4dcc82 280px,#38c896 281px,#2bc3a8 282px,#01b9c6 284px,#1babde 286px,#2c90f0 289px,#317dfc 291px,#426afe 293px,#484ef1 297px,#4639da 302px,#3f28ae 310px,#3f28ad 311px,#463cdf 319px,#4757f7 324px,#3e6fff 327px,#2e84f9 329px,#22a1e4 332px,#1babde 333px,#01bac5 335px,#2cc4a6 337px,#39c895 338px,#68cd6c 340px,#9bc944 342px,#c2c22c 344px,#d0bf27 345px,#e1bc2b 347px,#e6bb2d 349px,#e1bc2b 351px,#d0bf27 353px,#c2c22c 354px,#9bc945 356px,#4dcb82 359px,#38c896 360px,#2bc3a8 361px,#01b9c7 363px,#1ca9df 365px,#2d8bf3 368px,#2f81fa 369px,#406cfe 371px,#4853f5 374px,#4538d7 379px,#412dbc 384px,#3f29b1 390px,#3e26a8 434px,#3e26a8 582px)"></div>
<div style="top:217px;height:6px;background:linear-gradient(90deg,#3e26a8 0,#3e27ab 185px,#402bb8 200px,#4434cf 209px,#4745e9 216px,#4465fd 223px,#347afd 226px,#1fa5e2 232px,#19acdc 233px,#01b8c9 235px,#0abdbe 236px,#20c1b1 237px,#39c895 239px,#4bcb84 240px,#96ca49 243px,#c3c22b 245px,#d6be28 246px,#e6bb2d 247px,#f3ba39 248px,#fcbd3d 249px,#fad52e 253px,#f6df29 257px,#f9d72d 261px,#febf3c 265px,#f7ba3c 266px,#d9be28 268px,#c5c22a 269px,#aec637 270px,#5bcc76 273px,#43ca8b 274px,#26c2ad 276px,#0ebdbb 277px,#01b8c9 278px,#1baade 280px,#2d88f6 284px,#3876fe 286px,#4466fd 288px,#4742e6 294px,#4331c7 299px,#412ebe 302px,#4435d0 310px,#4742e6 315px,#4561fc 320px,#3b72fe 322px,#327cfc 323px,#22a2e4 327px,#1babde 328px,#01b9c7 330px,#12beb9 331px,#28c3ab 332px,#45cb89 334px,#8ecb4f 337px,#b6c532 339px,#c6c22a 340px,#dabd28 342px,#e5bb2d 345px,#e0bc2a 347px,#d1bf27 349px,#c4c22b 350px,#a1c840 352px,#59cc78 355px,#42ca8c 356px,#25c2ad 358px,#0cbdbc 359px,#01b8ca 360px,#12b1d6 361px,#239fe5 363px,#3579fd 367px,#4466fd 369px,#4745e9 374px,#4433cb 379px,#402ab3 385px,#3e27aa 391px,#3e27ac 408px,#3e26a8 507px,#3e26a8 582px)"></div>
<div style="top:223px;height:5px;background:linear-gradient(90deg,#3e26a8 0,#3e27ac 176px,#412cb9 191px,#4435d1 200px,#4849ed 208px,#4465fd 214px,#3578fd 217px,#2e86f7 219px,#1da9e0 224px,#15afd9 225px,#07b5d0 226px,#01bac5 227px,#10beba 228px,#24c2ae 229px,#3bc993 231px,#63cd70 233px,#aac739 236px,#bfc32d 237px,#d2bf27 238px,#e1bc2b 239px,#f9bb3d 241px,#febf3b 242px,#f9d82c 247px,#f7db2a 251px,#fcce31 255px,#fdbd3d 258px,#f4ba39 259px,#e7bb2e 260px,#d8be28 261px,#c5c22a 262px,#97ca47 264px,#4acb84 267px,#38c896 268px,#2dc4a6 269px,#1bc0b4 270px,#05bbc1 271px,#04b6cd 272px,#14b0d8 273px,#23a0e5 275px,#307ffb 279px,#4367fd 282px,#4745e9 288px,#4536d3 294px,#422ebf 301px,#4331c6 304px,#4741e5 309px,#465ffb 314px,#3f6fff 316px,#2f81fa 318px,#21a4e3 322px,#1aacdd 323px,#01b9c7 325px,#10beba 326px,#26c2ac 327px,#40ca8d 329px,#83cc57 332px,#abc739 334px,#c8c129 336px,#d9bd28 338px,#e1bc2b 341px,#d6be28 344px,#c1c32c 346px,#a1c840 348px,#5fcd73 351px,#48cb86 352px,#37c897 353px,#2cc4a6 354px,#04bbc2 356px,#06b5cf 357px,#16afda 358px,#2895ec 361px,#347afd 364px,#4368fe 366px,#4848ec 371px,#4435d2 376px,#412dbb 382px,#3f28af 392px,#3e26a8 449px,#3e26a8 582px)"></div>
<div style="top:228px;height:6px;background:linear-gradient(90deg,#3e26a8 0,#3e27ac 163px,#402bb7 179px,#4433cd 189px,#4745e9 197px,#4366fd 205px,#3479fd 208px,#1ea7e1 215px,#18aedb 216px,#01b8c9 218px,#09bcbe 219px,#2bc3a8 221px,#41ca8c 223px,#81cc58 226px,#adc638 228px,#c0c32d 229px,#d1bf27 230px,#e0bc2a 231px,#f7ba3c 233px,#fdbd3c 234px,#fad42e 239px,#f8d92c 243px,#fdce31 247px,#febf3c 250px,#f9ba3d 251px,#e2bc2b 253px,#d2bf27 254px,#c0c32d 255px,#95ca49 257px,#4ccb82 260px,#3ac993 261px,#21c1b0 263px,#0bbdbd 264px,#01b8c9 265px,#19acdc 267px,#2c8ef2 271px,#317efb 273px,#4368fd 276px,#4747ec 282px,#4434cf 287px,#402bb7 291px,#412cb9 293px,#4742e6 302px,#465efb 308px,#406cfe 310px,#317dfc 312px,#249fe6 316px,#17aeda 318px,#08b5d0 319px,#02bac5 320px,#27c2ab 322px,#3eca8f 324px,#7ccc5c 327px,#a2c83f 329px,#bfc32d 331px,#d2bf27 333px,#dcbd29 336px,#d5be28 339px,#c6c22a 341px,#adc638 343px,#74cd62 346px,#4acb85 348px,#39c995 349px,#21c1b0 351px,#0abdbd 352px,#01b8c9 353px,#1aabdd 355px,#2d8af4 359px,#3479fd 361px,#4368fe 363px,#4849ed 368px,#4434ce 374px,#402bb7 380px,#3f28ae 388px,#3e26a8 469px,#3e26a8 582px)"></div>
<div style="top:234px;height:6px;background:linear-gradient(90deg,#3e26a8 0,#3e27ab 153px,#412dbb 171px,#4537d5 181px,#484ff2 190px,#426afe 196px,#327cfc 199px,#22a2e4 205px,#17aeda 207px,#01b8c9 209px,#08bcbf 210px,#29c3a9 212px,#3dc990 214px,#77cc60 217px,#b4c533 220px,#c6c22a 221px,#d5be28 222px,#edba34 224px,#f7ba3c 225px,#fdbd3d 226px,#fbd12f 231px,#fad52e 236px,#fec438 241px,#f9bb3d 243px,#d9be28 246px,#c9c129 247px,#a3c83f 249px,#5ecd74 252px,#39c895 254px,#22c1af 256px,#0ebdbb 257px,#01b9c6 258px,#09b4d1 259px,#17aeda 260px,#2b92ee 264px,#327cfc 267px,#4466fd 270px,#4747eb 276px,#4539d9 282px,#4535d2 291px,#473fe2 296px,#465efb 302px,#406cfe 304px,#317dfc 306px,#21a4e3 311px,#11b1d6 313px,#02b7cb 314px,#06bcc0 315px,#2ac3a9 317px,#3fca8e 319px,#8bcb51 323px,#aac739 325px,#c9c129 328px,#d6be28 331px,#d2bf27 334px,#bcc42f 337px,#a3c83f 339px,#6dcd67 342px,#47cb87 344px,#39c895 345px,#23c1af 347px,#0ebebb 348px,#01b9c6 349px,#09b4d1 350px,#17aeda 351px,#2c90f0 355px,#2f80fa 357px,#4368fe 360px,#4747eb 366px,#4434ce 372px,#402bb6 379px,#3e27ab 388px,#3e26a8 582px)"></div>
<div style="top:240px;height:5px;background:linear-gradient(90deg,#3e26a8 0,#3e28ac 148px,#412dbc 161px,#463cde 173px,#4757f7 182px,#3e6fff 187px,#2f82fa 190px,#239fe5 195px,#13b1d7 198px,#06b5cf 199px,#01b9c6 200px,#0cbdbc 201px,#1ec0b2 202px,#34c79c 204px,#3eca8f 205px,#74cc62 208px,#afc637 211px,#cec028 213px,#e7bb2e 215px,#f8ba3d 217px,#fec239 219px,#fcd12f 224px,#fccf30 229px,#febd3c 234px,#f8ba3d 235px,#dabd28 238px,#ccc028 239px,#a9c73a 241px,#56cc7b 245px,#43ca8b 246px,#1fc0b2 249px,#0bbdbd 250px,#01b9c7 251px,#09b4d1 252px,#16afda 253px,#2994ed 257px,#3579fd 261px,#4466fd 264px,#4745e9 271px,#4433cc 276px,#3f28ae 280px,#3f28af 281px,#463de0 288px,#465dfb 295px,#3d70ff 298px,#307ffb 300px,#22a2e4 305px,#14b0d8 307px,#07b5cf 308px,#01bac5 309px,#0fbebb 310px,#22c1b0 311px,#42ca8b 314px,#87cb54 318px,#b0c636 321px,#c8c129 324px,#cfc028 327px,#c8c129 330px,#b0c636 333px,#87cb54 336px,#42ca8b 340px,#22c1b0 343px,#0ebebb 344px,#01bac6 345px,#07b5d0 346px,#15afd9 347px,#259be8 350px,#317efb 354px,#4367fd 357px,#4848ec 363px,#4433cd 370px,#412cb9 377px,#3f28ae 390px,#3e26a8 474px,#3e26a8 582px)"></div>
<div style="top:245px;height:6px;background:linear-gradient(90deg,#3e26a8 0,#3e27ac 121px,#402bb8 148px,#4433cb 157px,#4745e9 166px,#4367fd 175px,#317dfc 179px,#20a5e2 186px,#15afd8 188px,#01b8c9 190px,#06bcc0 191px,#26c2ad 193px,#43ca8b 196px,#8bcb51 200px,#aec637 202px,#ccc028 204px,#e3bb2c 206px,#f5ba3a 208px,#febf3c 210px,#fccf31 216px,#fdcc32 221px,#febf3c 225px,#f4ba3a 227px,#d7be28 230px,#c9c129 231px,#a9c73a 233px,#5bcc76 237px,#3bc993 239px,#28c2ab 241px,#07bcc0 243px,#01b8ca 244px,#17aeda 246px,#2c8ef1 251px,#337afd 254px,#4466fd 257px,#4747eb 264px,#463cdf 271px,#473fe2 280px,#484ff2 286px,#426afe 291px,#3080fb 294px,#21a2e4 299px,#15afd9 301px,#09b4d1 302px,#01b9c7 303px,#09bdbe 304px,#2ac3a9 306px,#3bc993 308px,#87cb54 313px,#abc739 316px,#c1c32d 319px,#c8c129 322px,#c1c32c 325px,#acc738 328px,#88cb53 331px,#3cc991 336px,#2bc3a8 338px,#1ec0b2 339px,#0bbdbc 340px,#01b9c6 341px,#07b5d0 342px,#14b0d8 343px,#259de7 346px,#337bfd 351px,#4466fd 354px,#4744e8 361px,#4332ca 368px,#402ab4 376px,#3e27ab 385px,#3e26a8 582px)"></div>
<div style="top:251px;height:6px;background:linear-gradient(90deg,#3e26a8 0,#3e28ac 110px,#422ebe 136px,#4536d2 147px,#4848ec 156px,#4465fd 164px,#3974fe 167px,#2e85f8 170px,#23a0e5 175px,#14b0d8 178px,#01b8c9 180px,#06bcc0 181px,#24c1ae 183px,#3eca8f 186px,#80cc59 190px,#b2c535 193px,#cdc028 195px,#e3bc2c 197px,#f9bb3d 200px,#fec338 203px,#fdcc32 209px,#fec239 215px,#fbbc3d 217px,#eeba34 219px,#dcbd29 221px,#d1bf27 222px,#b5c533 224px,#81cc59 227px,#4acb84 230px,#33c69d 232px,#1ec0b2 234px,#0cbdbc 235px,#01bac5 236px,#05b6ce 237px,#1aacdd 239px,#2c8ff1 244px,#317dfc 247px,#4466fd 251px,#4747eb 258px,#4538d7 262px,#3f28ae 267px,#3e27ac 268px,#463bdd 274px,#4757f7 280px,#406dfe 284px,#3080fa 287px,#249fe5 292px,#13b0d8 295px,#07b5d0 296px,#01b9c7 297px,#09bcbe 298px,#27c2ac 300px,#41ca8c 303px,#87cb54 308px,#a7c73c 311px,#bac430 314px,#c0c32d 317px,#b9c430 320px,#a6c83c 323px,#86cb55 326px,#40ca8d 331px,#26c2ac 334px,#08bcbf 336px,#01b8c8 337px,#08b4d1 338px,#14b0d8 339px,#249ee6 342px,#317efb 347px,#416bfe 350px,#484df0 356px,#4535d2 364px,#412cba 372px,#3e28ac 384px,#3e26a8 552px,#3e26a8 582px)"></div>
<div style="top:257px;height:5px;background:linear-gradient(90deg,#3e26a8 0,#3e27ac 95px,#412cba 117px,#4536d3 132px,#484bee 144px,#4369fe 153px,#2f81fa 158px,#239fe5 164px,#17aeda 167px,#04b6cd 169px,#01bac5 170px,#0abdbd 171px,#27c2ac 173px,#3fca8e 176px,#8dcb4f 181px,#bac430 184px,#d2bf27 186px,#ecba32 189px,#f8ba3d 191px,#fec13a 194px,#fec934 200px,#fdbd3d 207px,#f4ba39 209px,#ddbd29 212px,#c7c12a 214px,#9cc944 217px,#48cb86 222px,#33c69d 224px,#20c1b1 226px,#02bbc3 228px,#03b7cb 229px,#17aeda 231px,#2b92ee 236px,#347afd 240px,#4368fe 243px,#484df0 250px,#4744e8 258px,#4849ed 268px,#4660fb 275px,#3e6fff 278px,#2e83f9 281px,#22a1e4 286px,#11b1d6 289px,#06b6ce 290px,#01b9c6 291px,#0abdbe 292px,#26c2ac 294px,#3eca90 297px,#88cb53 303px,#a3c83e 306px,#b3c534 309px,#b6c532 313px,#acc738 316px,#96ca48 319px,#68cd6c 323px,#38c896 327px,#2ac3a8 329px,#03bbc2 332px,#02b7cb 333px,#16afd9 335px,#2a93ee 340px,#337bfd 344px,#4369fe 347px,#4849ed 354px,#4435d0 362px,#402cb8 371px,#3f28ae 385px,#3e26a8 502px,#3e26a8 582px)"></div>
<div style="top:262px;height:6px;background:linear-gradient(90deg,#3e26a8 0,#3e28ad 86px,#422ebe 107px,#463de0 123px,#475cfa 136px,#3f6efe 141px,#2e84f8 146px,#249fe5 152px,#13b1d7 156px,#01b8ca 158px,#02bbc3 159px,#27c2ac 162px,#3dc990 165px,#73cd62 169px,#aec637 173px,#c6c22a 175px,#d9bd28 177px,#f5ba3a 181px,#febe3c 184px,#fec636 191px,#fcbd3d 197px,#f5ba3b 199px,#dabd28 203px,#c5c22a 205px,#9ec942 208px,#4fcc80 213px,#37c897 215px,#29c3aa 217px,#02bac3 220px,#02b7cb 221px,#1baade 224px,#2d8cf3 230px,#327cfc 233px,#4367fd 237px,#484bef 243px,#4536d4 248px,#402ab3 252px,#3f28af 253px,#4740e3 260px,#475bfa 266px,#3d70ff 270px,#2f82fa 273px,#22a2e4 279px,#13b0d7 282px,#01b8c9 284px,#04bbc2 285px,#29c3aa 288px,#47cb87 292px,#89cb52 298px,#a5c83d 302px,#afc637 306px,#a7c73c 310px,#8ecb4f 314px,#58cc79 319px,#39c895 322px,#24c1af 325px,#09bcbe 327px,#01b9c6 328px,#05b6ce 329px,#18aedb 331px,#2c8ef1 337px,#317dfc 340px,#4367fd 344px,#4743e7 353px,#4331c8 362px,#3f29b2 372px,#3e27a9 384px,#3e26a8 582px)"></div>
<div style="top:268px;height:6px;background:linear-gradient(90deg,#3e26a8 0,#3f29b1 81px,#4230c4 97px,#4740e3 111px,#4661fc 124px,#3a73fe 129px,#2e84f8 133px,#22a2e4 140px,#17aeda 143px,#01b8c9 146px,#03bbc2 147px,#26c2ad 150px,#42ca8b 154px,#92ca4b 160px,#b7c532 163px,#d5be28 166px,#efba35 170px,#f8ba3d 172px,#fec239 177px,#fec13a 184px,#f9ba3d 188px,#ddbd29 193px,#cbc129 195px,#a9c73a 198px,#52cc7e 204px,#3ac993 206px,#24c1ae 209px,#08bcbf 211px,#01b9c6 212px,#05b6ce 213px,#17aeda 215px,#2b90f0 221px,#327cfc 225px,#4269fe 229px,#4854f5 237px,#484bef 249px,#4854f5 256px,#426afe 262px,#307ffb 266px,#23a0e5 272px,#16aeda 275px,#04b6cd 277px,#01b9c6 278px,#08bcbf 279px,#22c1b0 281px,#47cb87 286px,#82cc57 292px,#9cc943 296px,#a6c73c 300px,#a1c840 304px,#8ccb50 308px,#5dcc74 313px,#38c896 317px,#25c2ae 320px,#02bac3 323px,#01b7ca 324px,#19acdc 327px,#2d89f5 334px,#347afd 337px,#4465fd 341px,#4742e6 351px,#4331c6 361px,#402ab4 372px,#3e27ab 392px,#3e26a8 582px)"></div>
<div style="top:274px;height:5px;background:linear-gradient(90deg,#3e26a9 0,#3f29b1 54px,#422ebf 79px,#463adb 94px,#4757f7 108px,#3f6eff 115px,#2e83f9 120px,#239fe5 127px,#16afd9 131px,#01b8c9 134px,#03bbc2 135px,#24c1ae 138px,#3eca8f 142px,#79cc5e 147px,#aac739 151px,#c8c129 154px,#dfbc2a 157px,#f7ba3c 162px,#febf3b 167px,#fcbd3d 175px,#f5ba3a 178px,#dbbd29 183px,#c2c22c 186px,#a1c840 189px,#51cc7f 195px,#3bc993 197px,#27c2ac 200px,#04bbc2 203px,#01b8c9 204px,#1ca9df 208px,#2d88f6 215px,#3579fd 218px,#4563fd 222px,#4747eb 228px,#4433cd 234px,#4433cb 237px,#4743e7 243px,#4660fb 250px,#3c72ff 254px,#2f81fa 257px,#23a0e5 264px,#12b1d7 268px,#02b7cb 270px,#02bac5 271px,#15bfb8 273px,#28c3aa 275px,#3fca8e 279px,#7ccc5c 286px,#94ca4a 290px,#9dc943 294px,#99c946 298px,#87cb54 302px,#5fcd73 307px,#3cc992 311px,#24c2ae 315px,#04bbc2 318px,#01b8c8 319px,#1baade 323px,#2d8af5 330px,#337bfc 333px,#4368fd 337px,#4847ec 346px,#4433cd 356px,#402bb6 367px,#3e28ac 383px,#3e26a8 582px)"></div>
<div style="top:279px;height:6px;background:linear-gradient(90deg,#3e26a8 0,#3f29b1 43px,#4330c5 67px,#4740e3 84px,#465efb 98px,#3b73fe 104px,#2f83f9 108px,#22a1e4 116px,#14b0d8 120px,#05b6cd 122px,#01b9c8 123px,#04bbc2 124px,#2ac3a8 128px,#43ca8a 132px,#93ca4b 139px,#bac430 143px,#d1bf27 146px,#ebba31 151px,#f8ba3d 157px,#f6ba3b 164px,#e4bb2c 170px,#ccc028 174px,#b2c635 177px,#78cc5f 182px,#3eca8f 187px,#23c1af 191px,#02bbc3 194px,#01b8ca 195px,#1baade 199px,#2d8af4 207px,#3677fe 212px,#4465fd 218px,#484df0 231px,#484ef1 238px,#4563fd 245px,#3777fe 249px,#2e86f7 252px,#1da8e0 259px,#14b0d8 261px,#04b6cc 263px,#01b9c6 264px,#06bcc0 265px,#26c2ad 268px,#42ca8b 273px,#78cc5f 280px,#90ca4d 285px,#94ca4a 290px,#86cb55 295px,#5ecc74 301px,#38c896 306px,#22c1b0 310px,#04bbc2 313px,#01b9c8 314px,#0db3d3 316px,#1da8e0 319px,#2e85f8 327px,#3677fe 330px,#4465fd 334px,#4740e4 346px,#4230c3 358px,#3f28af 372px,#3e27a9 388px,#3e26a8 582px)"></div>
<div style="top:285px;height:5px;background:linear-gradient(90deg,#3e27a9 0,#3f29b1 35px,#4330c4 55px,#4740e4 72px,#4563fd 88px,#3677fe 94px,#2d8af5 99px,#1caadf 108px,#0db3d3 111px,#01b8c9 113px,#02bac4 114px,#2cc4a7 119px,#41ca8c 123px,#8fcb4e 131px,#b7c532 136px,#cec028 140px,#e0bc2a 146px,#e1bc2b 153px,#d2bf27 159px,#bdc32e 163px,#96ca49 168px,#44cb89 176px,#25c2ad 181px,#06bcc0 184px,#01b9c6 185px,#03b7cc 186px,#19addc 189px,#2d8bf4 197px,#327dfc 200px,#4269fe 204px,#484ff2 212px,#484bef 218px,#465dfa 228px,#3f6fff 234px,#2e84f9 240px,#23a0e5 248px,#12b1d6 253px,#04b6cc 255px,#04bbc2 257px,#27c2ac 261px,#45cb89 267px,#79cc5e 275px,#8acb52 280px,#89cb52 285px,#78cc5f 290px,#45cb89 298px,#26c2ad 304px,#02bbc3 308px,#01b8c8 309px,#1ca9df 314px,#2d89f5 322px,#3678fd 326px,#4563fd 331px,#473fe3 344px,#422fc0 358px,#3f29b0 374px,#3e27aa 424px,#3e26a8 582px)"></div>
<div style="top:290px;height:6px;background:linear-gradient(90deg,#3e27a9 0,#402ab3 30px,#4331c7 48px,#4743e7 64px,#4464fd 79px,#3677fe 85px,#2d89f6 90px,#1ca9df 100px,#10b2d5 103px,#03b6cc 105px,#02bbc3 107px,#29c3aa 112px,#45cb89 118px,#8ccb50 128px,#a8c73b 134px,#b3c534 140px,#adc638 146px,#97ca48 152px,#68cd6c 159px,#3cc991 165px,#25c2ad 170px,#04bbc2 174px,#03b7cb 176px,#19addc 180px,#2d8bf3 190px,#317dfc 194px,#4465fd 200px,#4848ec 208px,#4538d8 214px,#4538d8 217px,#484aee 223px,#4466fd 229px,#337bfd 233px,#1aabdd 244px,#02b7cb 248px,#01bac5 249px,#0fbebb 251px,#28c3ab 254px,#44ca8a 260px,#71cd64 268px,#81cc58 273px,#82cc58 278px,#74cc62 283px,#48cb86 291px,#30c5a1 296px,#21c1b0 299px,#07bcc0 302px,#01b8ca 304px,#19addc 308px,#2d8cf3 317px,#327cfc 321px,#4368fe 326px,#4848ec 337px,#4434cf 349px,#402bb7 362px,#3e27ac 381px,#3e26a8 582px)"></div>
<div style="top:296px;height:6px;background:linear-gradient(90deg,#3e27ab 0,#402ab5 26px,#4332cb 43px,#4746ea 59px,#4465fd 73px,#317efb 81px,#22a2e4 93px,#15afd9 98px,#02b7ca 102px,#02bbc3 104px,#27c2ac 110px,#54cc7c 124px,#61cd71 131px,#5ecc74 138px,#46cb88 146px,#24c1ae 156px,#02bbc3 161px,#02b7cb 163px,#1aacdd 168px,#2d8cf3 179px,#347afd 186px,#406cfe 195px,#406dfe 208px,#317dfc 219px,#2798ea 229px,#19addc 236px,#03b7cc 240px,#03bbc2 242px,#28c2ab 247px,#4acb85 255px,#6bcd69 262px,#78cc5f 268px,#73cd62 274px,#59cc78 281px,#36c898 288px,#22c1b0 293px,#03bbc3 297px,#03b7cc 299px,#19addc 303px,#2d8bf4 313px,#3678fd 318px,#4466fd 323px,#4742e6 337px,#4331c6 351px,#3f29b1 367px,#3e27a9 390px,#3e26a8 582px)"></div>
<div style="top:302px;height:5px;background:linear-gradient(90deg,#3e27ac 0,#402bb7 23px,#4434cf 40px,#484bee 57px,#4269fe 71px,#3080fb 79px,#20a5e3 94px,#10b2d5 101px,#01b8c9 106px,#06bcc0 110px,#1fc0b2 119px,#25c2ae 128px,#18bfb6 137px,#01bac5 145px,#04b6cd 148px,#1baade 155px,#2d89f5 167px,#347afd 171px,#4466fd 176px,#4848ec 184px,#463bdd 190px,#463de0 194px,#475dfa 204px,#3d71ff 209px,#2f81fa 213px,#23a1e4 222px,#14b0d8 227px,#01b8c9 231px,#06bcc0 233px,#27c2ac 238px,#48cb86 247px,#67cd6c 255px,#71cd64 262px,#67cd6c 269px,#48cb86 277px,#20c1b1 287px,#04bbc2 291px,#01b8ca 293px,#1aacdd 298px,#2d89f5 309px,#3678fd 314px,#4464fd 320px,#473fe3 336px,#422fc1 353px,#3f29b0 373px,#3e27a9 434px,#3e26a8 582px)"></div>
<div style="top:307px;height:6px;background:linear-gradient(90deg,#3f28ae 0,#412dbb 22px,#463de0 45px,#465ffb 66px,#3b73fe 75px,#2f82f9 82px,#21a3e3 102px,#18addb 120px,#20a4e3 139px,#2d8bf4 158px,#347afd 167px,#4465fd 177px,#4755f6 188px,#475cfa 196px,#3e6fff 203px,#2f82f9 208px,#21a3e4 217px,#11b1d6 222px,#01b8c9 225px,#05bbc1 227px,#27c2ac 232px,#55cc7b 245px,#66cd6d 252px,#65cd6e 259px,#51cc7f 267px,#31c69f 276px,#1ec0b2 281px,#04bbc2 285px,#01b8ca 287px,#1babde 293px,#2d87f6 305px,#3677fe 310px,#4465fd 316px,#4740e4 333px,#422fc2 350px,#3f29b0 369px,#3e27aa 411px,#3e26a8 582px)"></div>
<div style="top:313px;height:6px;background:linear-gradient(90deg,#402ab4 0,#422ebf 21px,#4740e3 46px,#465ffb 69px,#3975fe 83px,#2e83f9 94px,#2d8df2 113px,#2e84f8 134px,#3974fe 158px,#317dfc 176px,#2994ed 193px,#1aacdd 206px,#02b7ca 213px,#05bbc1 216px,#28c3ab 223px,#51cc7f 238px,#5ecd74 246px,#59cc78 254px,#3ac993 265px,#24c2ae 273px,#02bbc3 279px,#01b8ca 281px,#1aacdd 287px,#2d89f5 300px,#347afd 305px,#4466fd 312px,#4741e5 330px,#4230c3 348px,#3f29af 369px,#3e27a9 400px,#3e26a8 582px)"></div>
<div style="top:319px;height:5px;background:linear-gradient(90deg,#3e28ad 0,#4332c9 28px,#484aee 58px,#4563fd 85px,#406dfe 108px,#4563fd 126px,#484bee 144px,#4741e5 155px,#484df0 164px,#4368fe 174px,#307ffb 181px,#20a5e3 194px,#0fb2d5 200px,#01b9c8 204px,#09bcbe 207px,#27c2ab 213px,#4fcc80 229px,#5bcc77 238px,#54cc7d 247px,#34c79c 260px,#24c1ae 266px,#02bac5 273px,#05b6ce 276px,#19acdc 281px,#2d89f5 295px,#3579fd 301px,#4466fd 308px,#4742e6 327px,#4330c5 346px,#3f29b2 368px,#3e27aa 412px,#3e26a8 582px)"></div>
<div style="top:324px;height:6px;background:linear-gradient(90deg,#412ebe 0,#4332c9 24px,#4847ec 66px,#4758f8 107px,#4851f4 129px,#473fe3 151px,#4849ec 160px,#4369fe 172px,#2f81fa 179px,#21a3e3 190px,#11b1d6 196px,#01b8c9 200px,#08bcbf 203px,#27c2ac 209px,#44cb89 223px,#4ecc81 233px,#44cb8a 243px,#26c2ad 258px,#02bac4 266px,#04b6cd 269px,#1baade 276px,#2e87f7 291px,#3678fe 297px,#4564fd 305px,#473fe3 326px,#422fc0 348px,#3f28af 373px,#3e27a9 458px,#3e26a8 582px)"></div>
<div style="top:330px;height:6px;background:linear-gradient(90deg,#402bb6 0,#4331c7 28px,#463cde 64px,#484bef 104px,#4269fe 140px,#307ffb 156px,#23a0e5 174px,#11b1d6 184px,#01b8ca 189px,#04bbc2 192px,#27c2ab 201px,#3fca8e 217px,#43ca8a 228px,#35c79b 241px,#25c2ae 250px,#02bac5 259px,#04b6cc 262px,#1aacdd 269px,#2d87f6 286px,#3777fe 293px,#4562fc 302px,#463ee1 325px,#412dbc 351px,#3e27ac 380px,#3e27a9 443px,#3e26a8 582px)"></div>
<div style="top:336px;height:5px;background:linear-gradient(90deg,#402ab5 0,#4433cc 50px,#4331c7 84px,#463adb 99px,#475bfa 121px,#3c71ff 132px,#2f82f9 140px,#21a3e4 157px,#12b1d7 166px,#01b8c9 172px,#06bcc0 176px,#28c3ab 186px,#41ca8c 205px,#45cb88 217px,#37c898 231px,#25c2ae 242px,#03bbc2 251px,#03b7cc 255px,#1aabdd 263px,#2d88f6 281px,#3678fd 288px,#4465fd 297px,#4740e4 321px,#422fc2 346px,#3f29b0 375px,#3e27a9 439px,#3e26a8 582px)"></div>
<div style="top:341px;height:6px;background:linear-gradient(90deg,#4331c7 0,#4332c8 50px,#412dbd 77px,#4433cb 88px,#4849ed 105px,#4367fd 120px,#3080fb 130px,#21a4e3 147px,#12b1d6 155px,#02b7cb 160px,#05bbc1 164px,#28c2ab 174px,#42ca8b 193px,#48cb86 206px,#3bc993 220px,#24c1af 235px,#03bbc3 244px,#03b7cc 248px,#1babde 257px,#2d88f6 276px,#3777fe 284px,#4563fd 294px,#463ee1 321px,#412ebe 350px,#3f28ae 384px,#3e26a8 546px,#3e26a8 582px)"></div>
<div style="top:347px;height:6px;background:linear-gradient(90deg,#4433cd 0,#463adc 50px,#484aee 79px,#4369fe 103px,#3080fb 115px,#21a3e4 134px,#10b2d5 144px,#01b8c8 150px,#07bcc0 154px,#27c2ab 164px,#3fca8e 184px,#44cb89 197px,#37c898 213px,#25c2ae 226px,#02bac4 237px,#03b6cc 241px,#1aabdd 250px,#2d87f7 271px,#3876fe 280px,#4562fc 291px,#463de0 320px,#412dbc 351px,#3e27ac 387px,#3e26a8 582px)"></div>
<div style="top:353px;height:5px;background:linear-gradient(90deg,#422fc1 0,#4435d0 20px,#4850f3 57px,#416bfe 80px,#2f82f9 95px,#22a2e4 116px,#12b1d6 128px,#01b8ca 135px,#05bbc1 140px,#27c2ac 152px,#3cc992 174px,#3dca90 190px,#2ec4a4 210px,#1dc0b3 219px,#02bac3 228px,#04b6cd 233px,#1babde 243px,#2d88f6 265px,#3578fd 274px,#4564fd 286px,#4740e3 316px,#422fc0 348px,#3f28ae 385px,#3e26a9 470px,#3e26a8 582px)"></div>
<div style="top:358px;height:6px;background:linear-gradient(90deg,#4230c4 0,#4536d3 15px,#4850f3 42px,#416bfe 63px,#2e83f9 78px,#21a3e4 101px,#11b1d6 114px,#01b8c9 122px,#07bcc0 128px,#27c2ac 142px,#36c898 163px,#36c899 182px,#27c2ac 202px,#0dbdbc 213px,#01bac5 219px,#05b6ce 224px,#1baade 235px,#2d88f6 259px,#3678fd 269px,#4563fd 282px,#473fe2 315px,#422ec0 350px,#3f28ae 391px,#3e26a9 515px,#3e26a8 582px)"></div>
<div style="top:364px;height:5px;background:linear-gradient(90deg,#4853f5 0,#465efb 29px,#3c71ff 49px,#2e84f9 64px,#21a4e3 91px,#11b1d6 105px,#01b8c9 115px,#05bbc1 121px,#25c2ae 139px,#2ec5a4 159px,#28c2ab 181px,#16bfb7 194px,#02bac4 205px,#04b6cd 211px,#1baade 225px,#2e86f7 253px,#3776fe 264px,#4562fc 278px,#463de0 315px,#412dbc 355px,#3e28ac 400px,#3e26a8 582px)"></div>
<div style="top:369px;height:6px;background:linear-gradient(90deg,#475dfa 0,#4368fe 28px,#307ffb 52px,#20a5e3 89px,#10b2d5 106px,#01b8ca 118px,#06bcc0 130px,#14bfb8 152px,#0dbdbc 170px,#01b9c6 186px,#06b5cf 195px,#1da9e0 213px,#2e86f8 245px,#3876fe 257px,#4562fc 273px,#463de0 313px,#412dbc 356px,#3e27ac 405px,#3e26a8 582px)"></div>
<div style="top:375px;height:6px;background:linear-gradient(90deg,#4434ce 0,#4740e4 17px,#465efb 40px,#3a74fe 55px,#2e84f8 67px,#20a4e3 100px,#0bb3d2 134px,#09b4d1 158px,#1ea7e1 195px,#2d8af5 230px,#3479fd 245px,#4564fd 264px,#4741e4 306px,#422fc2 349px,#3f28af 398px,#3e26a9 504px,#3e26a8 582px)"></div>
<div style="top:381px;height:5px;background:linear-gradient(90deg,#4850f2 0,#475cfa 27px,#3c71ff 50px,#2e83f9 68px,#249ee6 109px,#1fa6e2 148px,#2699e9 189px,#337afd 231px,#4464fd 254px,#4742e6 300px,#4230c4 346px,#3f29b1 397px,#3e27a9 500px,#3e26a9 582px)"></div>
<div style="top:386px;height:6px;background:linear-gradient(90deg,#3578fd 0,#2e85f8 57px,#2796eb 123px,#2c90f0 170px,#337bfc 211px,#4564fd 242px,#4743e7 293px,#4230c4 345px,#3f29b0 400px,#3e27a9 504px,#3e26a9 582px)"></div>
<div style="top:392px;height:6px;background:linear-gradient(90deg,#406cfe 0,#3777fe 56px,#2e84f8 116px,#307efb 168px,#4465fd 223px,#4746ea 279px,#4331c8 338px,#3f29b2 396px,#3e26a9 489px,#3e26a8 582px)"></div>
<div style="top:398px;height:5px;background:linear-gradient(90deg,#4740e3 0,#484df0 41px,#4466fd 97px,#406dfe 148px,#465efb 209px,#4742e6 279px,#422fc1 352px,#3f28ae 426px,#3e26a9 582px)"></div>
<div style="top:403px;height:6px;background:linear-gradient(90deg,#4332c9 0,#4539d9 28px,#484cf0 71px,#475cfa 130px,#4757f7 193px,#4740e4 272px,#412dbd 366px,#3e28ac 456px,#3e27a9 582px)"></div>
<div style="top:409px;height:6px;background:linear-gradient(90deg,#4850f2 0,#4756f7 144px,#4745e9 237px,#422fc1 350px,#3f28ae 445px,#3e26a8 582px)"></div>
<div style="top:415px;height:5px;background:linear-gradient(90deg,#475af9 0,#4852f4 144px,#473ee1 249px,#402bb7 388px,#3e27aa 505px,#3e27a9 582px)"></div>
<div style="top:420px;height:6px;background:linear-gradient(90deg,#4853f5 0,#484aee 151px,#4539d9 261px,#402bb6 396px,#3e27aa 529px,#3e27a9 582px)"></div>
<div style="top:426px;height:5px;background:linear-gradient(90deg,#4744e8 0,#473ee1 172px,#4331c7 310px,#3f29af 452px,#3e26a9 582px)"></div>
<div style="top:431px;height:6px;background:linear-gradient(90deg,#4434cf 0,#4536d3 184px,#3f28ae 486px,#3e27ab 582px)"></div>
<div style="top:437px;height:6px;background:linear-gradient(90deg,#3f29b1 0,#4331c7 169px,#422ec0 303px,#3e27ab 550px,#3e27aa 582px)"></div>
<div style="top:443px;height:5px;background:linear-gradient(90deg,#402bb7 0,#422fc2 214px,#3e27ac 573px,#3e27ac 582px)"></div>
<div style="top:448px;height:3px;background:linear-gradient(90deg,#4330c5 0,#422ec0 254px,#3f28ad 567px,#3f28ad 582px)"></div>
</div>
<svg class="a" style="left:0;top:0" width="965" height="692" viewBox="0 0 965 692"><defs><clipPath id="pc"><rect x="296" y="173" width="583" height="451"/></clipPath></defs><g clip-path="url(#pc)"><path d="M295.82 150.32 L295.83 151.24 L295.84 152.16 L295.85 153.08 L295.85 154.00 L295.86 154.93 L295.87 155.85 L295.88 156.77 L295.89 157.69 L295.90 158.61 L295.91 159.53 L295.93 160.45 L295.94 161.37 L295.95 162.29 L295.96 163.22 L295.97 164.14 L295.98 165.06 L295.99 165.98 L296.00 166.90 L296.01 167.82 L296.02 168.74 L296.04 169.66 L296.05 170.58 L296.06 171.51 L296.07 172.43 L296.08 173.35 L296.10 174.27 L296.11 175.19 L296.12 176.11 L296.13 177.03 L296.15 177.95 L296.16 178.87 L296.17 179.79 L296.19 180.72 L296.20 181.64 L296.21 182.56 L296.23 183.48 L296.24 184.40 L296.26 185.32 L296.27 186.24 L296.28 187.16 L296.30 188.08 L296.31 189.01 L296.33 189.93 L296.34 190.85 L296.36 191.77 L296.37 192.69 L296.39 193.61 L296.41 194.53 L296.42 195.45 L296.44 196.37 L296.45 197.30 L296.47 198.22 L296.49 199.14 L296.51 200.06 L296.52 200.98 L296.54 201.90 L296.56 202.82 L296.57 203.74 L296.59 204.66 L296.61 205.59 L296.63 206.51 L296.65 207.43 L296.67 208.35 L296.69 209.27 L296.70 210.19 L296.72 211.11 L296.74 212.03 L296.76 212.95 L296.78 213.88 L296.80 214.80 L296.82 215.72 L296.85 216.64 L296.87 217.56 L296.89 218.48 L296.91 219.40 L296.93 220.32 L296.95 221.24 L296.97 222.16 L297.00 223.09 L297.02 224.01 L297.04 224.93 L297.07 225.85 L297.09 226.77 L297.11 227.69 L297.14 228.61 L297.16 229.53 L297.19 230.45 L297.21 231.38 L297.24 232.30 L297.26 233.22 L297.29 234.14 L297.31 235.06 L297.34 235.98 L297.37 236.90 L297.39 237.82 L297.42 238.74 L297.45 239.67 L297.48 240.59 L297.50 241.51 L297.53 242.43 L297.56 243.35 L297.59 244.27 L297.62 245.19 L297.65 246.11 L297.68 247.03 L297.71 247.96 L297.74 248.88 L297.77 249.80 L297.80 250.72 L297.84 251.64 L297.87 252.56 L297.90 253.48 L297.93 254.40 L297.97 255.32 L298.00 256.24 L298.04 257.17 L298.07 258.09 L298.11 259.01 L298.14 259.93 L298.18 260.85 L298.21 261.77 L298.25 262.69 L298.29 263.61 L298.32 264.53 L298.36 265.46 L298.40 266.38 L298.44 267.30 L298.48 268.22 L298.52 269.14 L298.56 270.06 L298.60 270.98 L298.64 271.90 L298.68 272.82 L298.72 273.75 L298.76 274.67 L298.81 275.59 L298.85 276.51 L298.89 277.43 L298.94 278.35 L298.98 279.27 L299.03 280.19 L299.07 281.11 L299.12 282.04 L299.17 282.96 L299.22 283.88 L299.26 284.80 L299.31 285.72 L299.36 286.64 L299.41 287.56 L299.46 288.48 L299.51 289.40 L299.56 290.33 L299.61 291.25 L299.67 292.17 L299.72 293.09 L299.77 294.01 L299.83 294.93 L299.88 295.85 L299.94 296.77 L300.00 297.69 L300.05 298.61 L300.11 299.54 L300.17 300.46 L300.23 301.38 L300.29 302.30 L300.35 303.22 L300.41 304.14 L300.47 305.06 L300.53 305.98 L300.59 306.90 L300.66 307.83 L300.72 308.75 L300.79 309.67 L300.85 310.59 L300.92 311.51 L300.99 312.43 L301.05 313.35 L301.12 314.27 L301.19 315.19 L301.26 316.12 L301.34 317.04 L301.41 317.96 L301.48 318.88 L301.55 319.80 L301.63 320.72 L301.70 321.64 L301.78 322.56 L301.86 323.48 L301.94 324.41 L302.01 325.33 L302.09 326.25 L302.18 327.17 L302.26 328.09 L302.34 329.01 L302.42 329.93 L302.51 330.85 L302.59 331.77 L302.68 332.69 L302.77 333.62 L302.86 334.54 L302.94 335.46 L303.04 336.38 L303.13 337.30 L303.22 338.22 L303.31 339.14 L303.41 340.06 L303.50 340.98 L303.60 341.91 L303.70 342.83 L303.80 343.75 L303.90 344.67 L304.00 345.59 L304.10 346.51 L304.20 347.43 L304.31 348.35 L304.41 349.27 L304.52 350.20 L304.63 351.12 L304.74 352.04 L304.85 352.96 L304.96 353.88 L305.08 354.80 L305.19 355.72 L305.31 356.64 L305.42 357.56 L305.54 358.49 L305.66 359.41 L305.78 360.33 L305.91 361.25 L306.03 362.17 L306.16 363.09 L306.28 364.01 L306.41 364.93 L306.54 365.85 L306.67 366.78 L306.81 367.70 L306.94 368.62 L307.08 369.54 L307.21 370.46 L307.35 371.38 L307.49 372.30 L307.64 373.22 L307.78 374.14 L307.92 375.06 L308.07 375.99 L308.22 376.91 L308.37 377.83 L308.52 378.75 L308.68 379.67 L308.83 380.59 L308.99 381.51 L309.15 382.43 L309.31 383.35 L309.47 384.28 L309.64 385.20 L309.80 386.12 L309.97 387.04 L310.14 387.96 L310.32 388.88 L310.49 389.80 L310.67 390.72 L310.85 391.64 L311.03 392.57 L311.21 393.49 L311.39 394.41 L311.58 395.33 L311.77 396.25 L311.96 397.17 L312.15 398.09 L312.35 399.01 L312.54 399.93 L312.74 400.86 L312.95 401.78 L313.15 402.70 L313.36 403.62 L313.57 404.54 L313.78 405.46 L313.99 406.38 L314.21 407.30 L314.43 408.22 L314.65 409.15 L314.87 410.07 L315.10 410.99 L315.32 411.91 L315.56 412.83 L315.79 413.75 L316.03 414.67 L316.27 415.59 L316.51 416.51 L316.75 417.43 L317.00 418.36 L317.25 419.28 L317.50 420.20 L317.76 421.12 L318.02 422.04 L318.28 422.96 L318.55 423.88 L318.81 424.80 L319.09 425.72 L319.36 426.65 L319.64 427.57 L319.92 428.49 L320.20 429.41 L320.49 430.33 L320.78 431.25 L321.07 432.17 L321.37 433.09 L321.67 434.01 L321.97 434.94 L322.28 435.86 L322.59 436.78 L322.90 437.70 L323.22 438.62 L323.54 439.54 L323.87 440.46 L324.19 441.38 L325.07 443.80 L325.95 446.14 L326.83 448.42 L327.71 450.64 L328.59 452.79 L329.47 454.90 L330.35 456.94 L331.23 458.94 L332.10 460.89 L332.98 462.80 L333.86 464.66 L334.74 466.48 L335.62 468.26 L336.50 470.00 L337.38 471.71 L338.26 473.38 L339.13 475.02 L340.01 476.62 L340.89 478.19 L341.77 479.74 L342.65 481.25 L343.53 482.74 L344.41 484.20 L345.29 485.63 L346.16 487.04 L347.04 488.43 L347.92 489.79 L348.80 491.13 L349.68 492.45 L350.56 493.75 L351.44 495.03 L352.32 496.29 L353.19 497.52 L354.07 498.74 L354.95 499.94 L355.83 501.13 L356.71 502.30 L357.59 503.45 L358.47 504.58 L359.35 505.70 L360.22 506.81 L361.10 507.89 L361.98 508.97 L362.86 510.03 L363.74 511.08 L364.62 512.11 L365.50 513.13 L366.38 514.14 L367.26 515.14 L368.13 516.12 L369.01 517.09 L369.89 518.05 L370.77 519.00 L371.65 519.94 L372.53 520.87 L373.41 521.79 L374.29 522.69 L375.16 523.59 L376.04 524.48 L376.92 525.36 L377.80 526.22 L378.68 527.08 L379.56 527.93 L380.44 528.77 L381.32 529.61 L382.19 530.43 L383.07 531.25 L383.95 532.06 L384.83 532.86 L385.71 533.65 L386.59 534.43 L387.47 535.21 L388.35 535.98 L389.22 536.74 L390.10 537.50 L390.98 538.25 L391.86 538.99 L392.74 539.72 L393.62 540.45 L394.50 541.17 L395.38 541.89 L396.25 542.60 L397.13 543.30 L398.01 544.00 L398.89 544.69 L399.77 545.38 L400.65 546.06 L401.53 546.73 L402.41 547.40 L403.29 548.06 L404.16 548.72 L405.04 549.37 L405.92 550.02 L406.80 550.66 L407.68 551.30 L408.56 551.93 L409.44 552.56 L410.32 553.18 L411.19 553.80 L412.07 554.41 L412.95 555.02 L413.83 555.63 L414.71 556.23 L415.59 556.82 L416.47 557.41 L417.35 558.00 L418.22 558.58 L419.10 559.16 L419.98 559.73 L420.86 560.30 L421.74 560.87 L422.62 561.43 L423.50 561.99 L424.38 562.55 L425.25 563.10 L426.13 563.64 L427.01 564.19 L427.89 564.73 L428.77 565.26 L429.65 565.80 L430.53 566.33 L431.41 566.85 L432.28 567.37 L433.16 567.89 L434.04 568.41 L434.92 568.92 L435.80 569.43 L436.68 569.94 L437.56 570.44 L438.44 570.94 L439.32 571.44 L440.19 571.93 L441.07 572.42 L441.95 572.91 L442.83 573.40 L443.71 573.88 L444.59 574.36 L445.47 574.84 L446.35 575.31 L447.22 575.78 L448.10 576.25 L448.98 576.72 L449.86 577.18 L450.74 577.64 L451.62 578.10 L452.50 578.55 L453.38 579.01 L454.25 579.46 L455.13 579.90 L456.01 580.35 L456.89 580.79 L457.77 581.23 L458.65 581.67 L459.53 582.11 L460.41 582.54 L461.28 582.97 L462.16 583.40 L463.04 583.83 L463.92 584.25 L464.80 584.67 L465.68 585.09 L466.56 585.51 L467.44 585.93 L468.31 586.34 L469.19 586.75 L470.07 587.16 L470.95 587.57 L471.83 587.98 L472.71 588.38 L473.59 588.78 L474.47 589.18 L475.35 589.58 L476.22 589.97 L477.10 590.37 L477.98 590.76 L478.86 591.15 L479.74 591.54 L480.62 591.92 L481.50 592.31 L482.38 592.69 L483.25 593.07 L484.13 593.45 L485.01 593.83 L485.89 594.20 L486.77 594.58 L487.65 594.95 L488.53 595.32 L489.41 595.69 L490.28 596.06 L491.16 596.42 L492.04 596.78 L492.92 597.15 L493.80 597.51 L494.68 597.87 L495.56 598.22 L496.44 598.58 L497.31 598.93 L498.19 599.29 L499.07 599.64 L499.95 599.99 L500.83 600.34 L501.71 600.68 L502.59 601.03 L503.47 601.37 L504.34 601.71 L505.22 602.05 L506.10 602.39 L506.98 602.73 L507.86 603.07 L508.74 603.40 L509.62 603.74 L510.50 604.07 L511.37 604.40 L512.25 604.73 L513.13 605.06 L514.01 605.39 L514.89 605.71 L515.77 606.04 L516.65 606.36 L517.53 606.68 L518.41 607.00 L519.28 607.32 L520.16 607.64 L521.04 607.96 L521.92 608.27 L522.80 608.59 L523.68 608.90 L524.56 609.21 L525.44 609.53 L526.31 609.84 L527.19 610.14 L528.07 610.45 L528.95 610.76 L529.83 611.06 L530.71 611.37 L531.59 611.67 L532.47 611.97 L533.34 612.27 L534.22 612.57 L535.10 612.87 L535.98 613.17 L536.86 613.46 L537.74 613.76 L538.62 614.05 L539.50 614.35 L540.37 614.64 L541.25 614.93 L542.13 615.22 L543.01 615.51 L543.89 615.80 L544.77 616.08 L545.65 616.37 L546.53 616.65 L547.40 616.94 L548.28 617.22 L549.16 617.50 L550.04 617.78 L550.92 618.06 L551.80 618.34 L552.68 618.62 L553.56 618.90 L554.44 619.17 L555.31 619.45 L556.19 619.72 L557.07 620.00 L557.95 620.27 L558.83 620.54 L559.71 620.81 L560.59 621.08 L561.47 621.35 L562.34 621.62 L563.22 621.88 L564.10 622.15 L564.98 622.42 L565.86 622.68 L566.74 622.94 L567.62 623.21 L568.50 623.47 L569.37 623.73 L570.25 623.99 L571.13 624.25 L572.01 624.51 L572.89 624.77 L573.77 625.02 L574.65 625.28 L575.53 625.53 L576.40 625.79 L577.28 626.04 L578.16 626.30 L579.04 626.55 L579.92 626.80 L580.80 627.05 L581.68 627.30 L582.56 627.55 L583.43 627.80 L584.31 628.04 L585.19 628.29 L586.07 628.54 L586.95 628.78 L586.95 628.78 L587.83 628.54 L588.71 628.29 L589.59 628.04 L590.47 627.80 L591.34 627.55 L592.22 627.30 L593.10 627.05 L593.98 626.80 L594.86 626.55 L595.74 626.30 L596.62 626.04 L597.50 625.79 L598.37 625.53 L599.25 625.28 L600.13 625.02 L601.01 624.77 L601.89 624.51 L602.77 624.25 L603.65 623.99 L604.53 623.73 L605.40 623.47 L606.28 623.21 L607.16 622.94 L608.04 622.68 L608.92 622.42 L609.80 622.15 L610.68 621.88 L611.56 621.62 L612.43 621.35 L613.31 621.08 L614.19 620.81 L615.07 620.54 L615.95 620.27 L616.83 620.00 L617.71 619.72 L618.59 619.45 L619.46 619.17 L620.34 618.90 L621.22 618.62 L622.10 618.34 L622.98 618.06 L623.86 617.78 L624.74 617.50 L625.62 617.22 L626.50 616.94 L627.37 616.65 L628.25 616.37 L629.13 616.08 L630.01 615.80 L630.89 615.51 L631.77 615.22 L632.65 614.93 L633.53 614.64 L634.40 614.35 L635.28 614.05 L636.16 613.76 L637.04 613.46 L637.92 613.17 L638.80 612.87 L639.68 612.57 L640.56 612.27 L641.43 611.97 L642.31 611.67 L643.19 611.37 L644.07 611.06 L644.95 610.76 L645.83 610.45 L646.71 610.14 L647.59 609.84 L648.46 609.53 L649.34 609.21 L650.22 608.90 L651.10 608.59 L651.98 608.27 L652.86 607.96 L653.74 607.64 L654.62 607.32 L655.49 607.00 L656.37 606.68 L657.25 606.36 L658.13 606.04 L659.01 605.71 L659.89 605.39 L660.77 605.06 L661.65 604.73 L662.53 604.40 L663.40 604.07 L664.28 603.74 L665.16 603.40 L666.04 603.07 L666.92 602.73 L667.80 602.39 L668.68 602.05 L669.56 601.71 L670.43 601.37 L671.31 601.03 L672.19 600.68 L673.07 600.34 L673.95 599.99 L674.83 599.64 L675.71 599.29 L676.59 598.93 L677.46 598.58 L678.34 598.22 L679.22 597.87 L680.10 597.51 L680.98 597.15 L681.86 596.78 L682.74 596.42 L683.62 596.06 L684.49 595.69 L685.37 595.32 L686.25 594.95 L687.13 594.58 L688.01 594.20 L688.89 593.83 L689.77 593.45 L690.65 593.07 L691.52 592.69 L692.40 592.31 L693.28 591.92 L694.16 591.54 L695.04 591.15 L695.92 590.76 L696.80 590.37 L697.68 589.97 L698.55 589.58 L699.43 589.18 L700.31 588.78 L701.19 588.38 L702.07 587.98 L702.95 587.57 L703.83 587.16 L704.71 586.75 L705.59 586.34 L706.46 585.93 L707.34 585.51 L708.22 585.09 L709.10 584.67 L709.98 584.25 L710.86 583.83 L711.74 583.40 L712.62 582.97 L713.49 582.54 L714.37 582.11 L715.25 581.67 L716.13 581.23 L717.01 580.79 L717.89 580.35 L718.77 579.90 L719.65 579.46 L720.52 579.01 L721.40 578.55 L722.28 578.10 L723.16 577.64 L724.04 577.18 L724.92 576.72 L725.80 576.25 L726.68 575.78 L727.55 575.31 L728.43 574.84 L729.31 574.36 L730.19 573.88 L731.07 573.40 L731.95 572.91 L732.83 572.42 L733.71 571.93 L734.58 571.44 L735.46 570.94 L736.34 570.44 L737.22 569.94 L738.10 569.43 L738.98 568.92 L739.86 568.41 L740.74 567.89 L741.62 567.37 L742.49 566.85 L743.37 566.33 L744.25 565.80 L745.13 565.26 L746.01 564.73 L746.89 564.19 L747.77 563.64 L748.65 563.10 L749.52 562.55 L750.40 561.99 L751.28 561.43 L752.16 560.87 L753.04 560.30 L753.92 559.73 L754.80 559.16 L755.68 558.58 L756.55 558.00 L757.43 557.41 L758.31 556.82 L759.19 556.23 L760.07 555.63 L760.95 555.02 L761.83 554.41 L762.71 553.80 L763.58 553.18 L764.46 552.56 L765.34 551.93 L766.22 551.30 L767.10 550.66 L767.98 550.02 L768.86 549.37 L769.74 548.72 L770.61 548.06 L771.49 547.40 L772.37 546.73 L773.25 546.06 L774.13 545.38 L775.01 544.69 L775.89 544.00 L776.77 543.30 L777.65 542.60 L778.52 541.89 L779.40 541.17 L780.28 540.45 L781.16 539.72 L782.04 538.99 L782.92 538.25 L783.80 537.50 L784.68 536.74 L785.55 535.98 L786.43 535.21 L787.31 534.43 L788.19 533.65 L789.07 532.86 L789.95 532.06 L790.83 531.25 L791.71 530.43 L792.58 529.61 L793.46 528.77 L794.34 527.93 L795.22 527.08 L796.10 526.22 L796.98 525.36 L797.86 524.48 L798.74 523.59 L799.61 522.69 L800.49 521.79 L801.37 520.87 L802.25 519.94 L803.13 519.00 L804.01 518.05 L804.89 517.09 L805.77 516.12 L806.64 515.14 L807.52 514.14 L808.40 513.13 L809.28 512.11 L810.16 511.08 L811.04 510.03 L811.92 508.97 L812.80 507.89 L813.68 506.81 L814.55 505.70 L815.43 504.58 L816.31 503.45 L817.19 502.30 L818.07 501.13 L818.95 499.94 L819.83 498.74 L820.71 497.52 L821.58 496.29 L822.46 495.03 L823.34 493.75 L824.22 492.45 L825.10 491.13 L825.98 489.79 L826.86 488.43 L827.74 487.04 L828.61 485.63 L829.49 484.20 L830.37 482.74 L831.25 481.25 L832.13 479.74 L833.01 478.19 L833.89 476.62 L834.77 475.02 L835.64 473.38 L836.52 471.71 L837.40 470.00 L838.28 468.26 L839.16 466.48 L840.04 464.66 L840.92 462.80 L841.80 460.89 L842.67 458.94 L843.55 456.94 L844.43 454.90 L845.31 452.79 L846.19 450.64 L847.07 448.42 L847.95 446.14 L848.83 443.80 L849.70 441.38 L850.03 440.46 L850.36 439.54 L850.68 438.62 L851.00 437.70 L851.31 436.78 L851.62 435.86 L851.93 434.94 L852.23 434.01 L852.53 433.09 L852.83 432.17 L853.12 431.25 L853.41 430.33 L853.70 429.41 L853.98 428.49 L854.26 427.57 L854.54 426.65 L854.81 425.72 L855.09 424.80 L855.35 423.88 L855.62 422.96 L855.88 422.04 L856.14 421.12 L856.40 420.20 L856.65 419.28 L856.90 418.36 L857.15 417.43 L857.39 416.51 L857.63 415.59 L857.87 414.67 L858.11 413.75 L858.34 412.83 L858.58 411.91 L858.80 410.99 L859.03 410.07 L859.25 409.15 L859.47 408.22 L859.69 407.30 L859.91 406.38 L860.12 405.46 L860.33 404.54 L860.54 403.62 L860.75 402.70 L860.95 401.78 L861.16 400.86 L861.36 399.93 L861.55 399.01 L861.75 398.09 L861.94 397.17 L862.13 396.25 L862.32 395.33 L862.51 394.41 L862.69 393.49 L862.87 392.57 L863.05 391.64 L863.23 390.72 L863.41 389.80 L863.58 388.88 L863.76 387.96 L863.93 387.04 L864.10 386.12 L864.26 385.20 L864.43 384.28 L864.59 383.35 L864.75 382.43 L864.91 381.51 L865.07 380.59 L865.22 379.67 L865.38 378.75 L865.53 377.83 L865.68 376.91 L865.83 375.99 L865.98 375.06 L866.12 374.14 L866.26 373.22 L866.41 372.30 L866.55 371.38 L866.69 370.46 L866.82 369.54 L866.96 368.62 L867.09 367.70 L867.23 366.78 L867.36 365.85 L867.49 364.93 L867.62 364.01 L867.74 363.09 L867.87 362.17 L867.99 361.25 L868.12 360.33 L868.24 359.41 L868.36 358.49 L868.48 357.56 L868.59 356.64 L868.71 355.72 L868.82 354.80 L868.94 353.88 L869.05 352.96 L869.16 352.04 L869.27 351.12 L869.38 350.20 L869.49 349.27 L869.59 348.35 L869.70 347.43 L869.80 346.51 L869.90 345.59 L870.00 344.67 L870.10 343.75 L870.20 342.83 L870.30 341.91 L870.40 340.98 L870.49 340.06 L870.59 339.14 L870.68 338.22 L870.77 337.30 L870.86 336.38 L870.96 335.46 L871.04 334.54 L871.13 333.62 L871.22 332.69 L871.31 331.77 L871.39 330.85 L871.48 329.93 L871.56 329.01 L871.64 328.09 L871.72 327.17 L871.81 326.25 L871.89 325.33 L871.96 324.41 L872.04 323.48 L872.12 322.56 L872.20 321.64 L872.27 320.72 L872.35 319.80 L872.42 318.88 L872.49 317.96 L872.56 317.04 L872.64 316.12 L872.71 315.19 L872.78 314.27 L872.85 313.35 L872.91 312.43 L872.98 311.51 L873.05 310.59 L873.11 309.67 L873.18 308.75 L873.24 307.83 L873.31 306.90 L873.37 305.98 L873.43 305.06 L873.49 304.14 L873.55 303.22 L873.61 302.30 L873.67 301.38 L873.73 300.46 L873.79 299.54 L873.85 298.61 L873.90 297.69 L873.96 296.77 L874.02 295.85 L874.07 294.93 L874.13 294.01 L874.18 293.09 L874.23 292.17 L874.29 291.25 L874.34 290.33 L874.39 289.40 L874.44 288.48 L874.49 287.56 L874.54 286.64 L874.59 285.72 L874.64 284.80 L874.68 283.88 L874.73 282.96 L874.78 282.04 L874.83 281.11 L874.87 280.19 L874.92 279.27 L874.96 278.35 L875.01 277.43 L875.05 276.51 L875.09 275.59 L875.14 274.67 L875.18 273.75 L875.22 272.82 L875.26 271.90 L875.30 270.98 L875.34 270.06 L875.38 269.14 L875.42 268.22 L875.46 267.30 L875.50 266.38 L875.54 265.46 L875.58 264.53 L875.61 263.61 L875.65 262.69 L875.69 261.77 L875.72 260.85 L875.76 259.93 L875.79 259.01 L875.83 258.09 L875.86 257.17 L875.90 256.24 L875.93 255.32 L875.97 254.40 L876.00 253.48 L876.03 252.56 L876.06 251.64 L876.10 250.72 L876.13 249.80 L876.16 248.88 L876.19 247.96 L876.22 247.03 L876.25 246.11 L876.28 245.19 L876.31 244.27 L876.34 243.35 L876.37 242.43 L876.40 241.51 L876.42 240.59 L876.45 239.67 L876.48 238.74 L876.51 237.82 L876.53 236.90 L876.56 235.98 L876.59 235.06 L876.61 234.14 L876.64 233.22 L876.66 232.30 L876.69 231.38 L876.71 230.45 L876.74 229.53 L876.76 228.61 L876.79 227.69 L876.81 226.77 L876.83 225.85 L876.86 224.93 L876.88 224.01 L876.90 223.09 L876.93 222.16 L876.95 221.24 L876.97 220.32 L876.99 219.40 L877.01 218.48 L877.03 217.56 L877.05 216.64 L877.08 215.72 L877.10 214.80 L877.12 213.88 L877.14 212.95 L877.16 212.03 L877.18 211.11 L877.20 210.19 L877.21 209.27 L877.23 208.35 L877.25 207.43 L877.27 206.51 L877.29 205.59 L877.31 204.66 L877.33 203.74 L877.34 202.82 L877.36 201.90 L877.38 200.98 L877.39 200.06 L877.41 199.14 L877.43 198.22 L877.45 197.30 L877.46 196.37 L877.48 195.45 L877.49 194.53 L877.51 193.61 L877.53 192.69 L877.54 191.77 L877.56 190.85 L877.57 189.93 L877.59 189.01 L877.60 188.08 L877.62 187.16 L877.63 186.24 L877.64 185.32 L877.66 184.40 L877.67 183.48 L877.69 182.56 L877.70 181.64 L877.71 180.72 L877.73 179.79 L877.74 178.87 L877.75 177.95 L877.77 177.03 L877.78 176.11 L877.79 175.19 L877.80 174.27 L877.82 173.35 L877.83 172.43 L877.84 171.51 L877.85 170.58 L877.86 169.66 L877.88 168.74 L877.89 167.82 L877.90 166.90 L877.91 165.98 L877.92 165.06 L877.93 164.14 L877.94 163.22 L877.95 162.29 L877.96 161.37 L877.97 160.45 L877.99 159.53 L878.00 158.61 L878.01 157.69 L878.02 156.77 L878.03 155.85 L878.04 154.93 L878.05 154.00 L878.05 153.08 L878.06 152.16 L878.07 151.24 L878.08 150.32 L879 629 L291 629 Z" fill="#cccccc" fill-opacity="0.4"/><g fill="none" stroke="#fff" stroke-width="2" stroke-dasharray="11.00 11.00"><path d="M295.82 150.32 L295.83 151.24 L295.84 152.16 L295.85 153.08 L295.85 154.00 L295.86 154.93 L295.87 155.85 L295.88 156.77 L295.89 157.69 L295.90 158.61 L295.91 159.53 L295.93 160.45 L295.94 161.37 L295.95 162.29 L295.96 163.22 L295.97 164.14 L295.98 165.06 L295.99 165.98 L296.00 166.90 L296.01 167.82 L296.02 168.74 L296.04 169.66 L296.05 170.58 L296.06 171.51 L296.07 172.43 L296.08 173.35 L296.10 174.27 L296.11 175.19 L296.12 176.11 L296.13 177.03 L296.15 177.95 L296.16 178.87 L296.17 179.79 L296.19 180.72 L296.20 181.64 L296.21 182.56 L296.23 183.48 L296.24 184.40 L296.26 185.32 L296.27 186.24 L296.28 187.16 L296.30 188.08 L296.31 189.01 L296.33 189.93 L296.34 190.85 L296.36 191.77 L296.37 192.69 L296.39 193.61 L296.41 194.53 L296.42 195.45 L296.44 196.37 L296.45 197.30 L296.47 198.22 L296.49 199.14 L296.51 200.06 L296.52 200.98 L296.54 201.90 L296.56 202.82 L296.57 203.74 L296.59 204.66 L296.61 205.59 L296.63 206.51 L296.65 207.43 L296.67 208.35 L296.69 209.27 L296.70 210.19 L296.72 211.11 L296.74 212.03 L296.76 212.95 L296.78 213.88 L296.80 214.80 L296.82 215.72 L296.85 216.64 L296.87 217.56 L296.89 218.48 L296.91 219.40 L296.93 220.32 L296.95 221.24 L296.97 222.16 L297.00 223.09 L297.02 224.01 L297.04 224.93 L297.07 225.85 L297.09 226.77 L297.11 227.69 L297.14 228.61 L297.16 229.53 L297.19 230.45 L297.21 231.38 L297.24 232.30 L297.26 233.22 L297.29 234.14 L297.31 235.06 L297.34 235.98 L297.37 236.90 L297.39 237.82 L297.42 238.74 L297.45 239.67 L297.48 240.59 L297.50 241.51 L297.53 242.43 L297.56 243.35 L297.59 244.27 L297.62 245.19 L297.65 246.11 L297.68 247.03 L297.71 247.96 L297.74 248.88 L297.77 249.80 L297.80 250.72 L297.84 251.64 L297.87 252.56 L297.90 253.48 L297.93 254.40 L297.97 255.32 L298.00 256.24 L298.04 257.17 L298.07 258.09 L298.11 259.01 L298.14 259.93 L298.18 260.85 L298.21 261.77 L298.25 262.69 L298.29 263.61 L298.32 264.53 L298.36 265.46 L298.40 266.38 L298.44 267.30 L298.48 268.22 L298.52 269.14 L298.56 270.06 L298.60 270.98 L298.64 271.90 L298.68 272.82 L298.72 273.75 L298.76 274.67 L298.81 275.59 L298.85 276.51 L298.89 277.43 L298.94 278.35 L298.98 279.27 L299.03 280.19 L299.07 281.11 L299.12 282.04 L299.17 282.96 L299.22 283.88 L299.26 284.80 L299.31 285.72 L299.36 286.64 L299.41 287.56 L299.46 288.48 L299.51 289.40 L299.56 290.33 L299.61 291.25 L299.67 292.17 L299.72 293.09 L299.77 294.01 L299.83 294.93 L299.88 295.85 L299.94 296.77 L300.00 297.69 L300.05 298.61 L300.11 299.54 L300.17 300.46 L300.23 301.38 L300.29 302.30 L300.35 303.22 L300.41 304.14 L300.47 305.06 L300.53 305.98 L300.59 306.90 L300.66 307.83 L300.72 308.75 L300.79 309.67 L300.85 310.59 L300.92 311.51 L300.99 312.43 L301.05 313.35 L301.12 314.27 L301.19 315.19 L301.26 316.12 L301.34 317.04 L301.41 317.96 L301.48 318.88 L301.55 319.80 L301.63 320.72 L301.70 321.64 L301.78 322.56 L301.86 323.48 L301.94 324.41 L302.01 325.33 L302.09 326.25 L302.18 327.17 L302.26 328.09 L302.34 329.01 L302.42 329.93 L302.51 330.85 L302.59 331.77 L302.68 332.69 L302.77 333.62 L302.86 334.54 L302.94 335.46 L303.04 336.38 L303.13 337.30 L303.22 338.22 L303.31 339.14 L303.41 340.06 L303.50 340.98 L303.60 341.91 L303.70 342.83 L303.80 343.75 L303.90 344.67 L304.00 345.59 L304.10 346.51 L304.20 347.43 L304.31 348.35 L304.41 349.27 L304.52 350.20 L304.63 351.12 L304.74 352.04 L304.85 352.96 L304.96 353.88 L305.08 354.80 L305.19 355.72 L305.31 356.64 L305.42 357.56 L305.54 358.49 L305.66 359.41 L305.78 360.33 L305.91 361.25 L306.03 362.17 L306.16 363.09 L306.28 364.01 L306.41 364.93 L306.54 365.85 L306.67 366.78 L306.81 367.70 L306.94 368.62 L307.08 369.54 L307.21 370.46 L307.35 371.38 L307.49 372.30 L307.64 373.22 L307.78 374.14 L307.92 375.06 L308.07 375.99 L308.22 376.91 L308.37 377.83 L308.52 378.75 L308.68 379.67 L308.83 380.59 L308.99 381.51 L309.15 382.43 L309.31 383.35 L309.47 384.28 L309.64 385.20 L309.80 386.12 L309.97 387.04 L310.14 387.96 L310.32 388.88 L310.49 389.80 L310.67 390.72 L310.85 391.64 L311.03 392.57 L311.21 393.49 L311.39 394.41 L311.58 395.33 L311.77 396.25 L311.96 397.17 L312.15 398.09 L312.35 399.01 L312.54 399.93 L312.74 400.86 L312.95 401.78 L313.15 402.70 L313.36 403.62 L313.57 404.54 L313.78 405.46 L313.99 406.38 L314.21 407.30 L314.43 408.22 L314.65 409.15 L314.87 410.07 L315.10 410.99 L315.32 411.91 L315.56 412.83 L315.79 413.75 L316.03 414.67 L316.27 415.59 L316.51 416.51 L316.75 417.43 L317.00 418.36 L317.25 419.28 L317.50 420.20 L317.76 421.12 L318.02 422.04 L318.28 422.96 L318.55 423.88 L318.81 424.80 L319.09 425.72 L319.36 426.65 L319.64 427.57 L319.92 428.49 L320.20 429.41 L320.49 430.33 L320.78 431.25 L321.07 432.17 L321.37 433.09 L321.67 434.01 L321.97 434.94 L322.28 435.86 L322.59 436.78 L322.90 437.70 L323.22 438.62 L323.54 439.54 L323.87 440.46 L324.19 441.38 L325.07 443.80 L325.95 446.14 L326.83 448.42 L327.71 450.64 L328.59 452.79 L329.47 454.90 L330.35 456.94 L331.23 458.94 L332.10 460.89 L332.98 462.80 L333.86 464.66 L334.74 466.48 L335.62 468.26 L336.50 470.00 L337.38 471.71 L338.26 473.38 L339.13 475.02 L340.01 476.62 L340.89 478.19 L341.77 479.74 L342.65 481.25 L343.53 482.74 L344.41 484.20 L345.29 485.63 L346.16 487.04 L347.04 488.43 L347.92 489.79 L348.80 491.13 L349.68 492.45 L350.56 493.75 L351.44 495.03 L352.32 496.29 L353.19 497.52 L354.07 498.74 L354.95 499.94 L355.83 501.13 L356.71 502.30 L357.59 503.45 L358.47 504.58 L359.35 505.70 L360.22 506.81 L361.10 507.89 L361.98 508.97 L362.86 510.03 L363.74 511.08 L364.62 512.11 L365.50 513.13 L366.38 514.14 L367.26 515.14 L368.13 516.12 L369.01 517.09 L369.89 518.05 L370.77 519.00 L371.65 519.94 L372.53 520.87 L373.41 521.79 L374.29 522.69 L375.16 523.59 L376.04 524.48 L376.92 525.36 L377.80 526.22 L378.68 527.08 L379.56 527.93 L380.44 528.77 L381.32 529.61 L382.19 530.43 L383.07 531.25 L383.95 532.06 L384.83 532.86 L385.71 533.65 L386.59 534.43 L387.47 535.21 L388.35 535.98 L389.22 536.74 L390.10 537.50 L390.98 538.25 L391.86 538.99 L392.74 539.72 L393.62 540.45 L394.50 541.17 L395.38 541.89 L396.25 542.60 L397.13 543.30 L398.01 544.00 L398.89 544.69 L399.77 545.38 L400.65 546.06 L401.53 546.73 L402.41 547.40 L403.29 548.06 L404.16 548.72 L405.04 549.37 L405.92 550.02 L406.80 550.66 L407.68 551.30 L408.56 551.93 L409.44 552.56 L410.32 553.18 L411.19 553.80 L412.07 554.41 L412.95 555.02 L413.83 555.63 L414.71 556.23 L415.59 556.82 L416.47 557.41 L417.35 558.00 L418.22 558.58 L419.10 559.16 L419.98 559.73 L420.86 560.30 L421.74 560.87 L422.62 561.43 L423.50 561.99 L424.38 562.55 L425.25 563.10 L426.13 563.64 L427.01 564.19 L427.89 564.73 L428.77 565.26 L429.65 565.80 L430.53 566.33 L431.41 566.85 L432.28 567.37 L433.16 567.89 L434.04 568.41 L434.92 568.92 L435.80 569.43 L436.68 569.94 L437.56 570.44 L438.44 570.94 L439.32 571.44 L440.19 571.93 L441.07 572.42 L441.95 572.91 L442.83 573.40 L443.71 573.88 L444.59 574.36 L445.47 574.84 L446.35 575.31 L447.22 575.78 L448.10 576.25 L448.98 576.72 L449.86 577.18 L450.74 577.64 L451.62 578.10 L452.50 578.55 L453.38 579.01 L454.25 579.46 L455.13 579.90 L456.01 580.35 L456.89 580.79 L457.77 581.23 L458.65 581.67 L459.53 582.11 L460.41 582.54 L461.28 582.97 L462.16 583.40 L463.04 583.83 L463.92 584.25 L464.80 584.67 L465.68 585.09 L466.56 585.51 L467.44 585.93 L468.31 586.34 L469.19 586.75 L470.07 587.16 L470.95 587.57 L471.83 587.98 L472.71 588.38 L473.59 588.78 L474.47 589.18 L475.35 589.58 L476.22 589.97 L477.10 590.37 L477.98 590.76 L478.86 591.15 L479.74 591.54 L480.62 591.92 L481.50 592.31 L482.38 592.69 L483.25 593.07 L484.13 593.45 L485.01 593.83 L485.89 594.20 L486.77 594.58 L487.65 594.95 L488.53 595.32 L489.41 595.69 L490.28 596.06 L491.16 596.42 L492.04 596.78 L492.92 597.15 L493.80 597.51 L494.68 597.87 L495.56 598.22 L496.44 598.58 L497.31 598.93 L498.19 599.29 L499.07 599.64 L499.95 599.99 L500.83 600.34 L501.71 600.68 L502.59 601.03 L503.47 601.37 L504.34 601.71 L505.22 602.05 L506.10 602.39 L506.98 602.73 L507.86 603.07 L508.74 603.40 L509.62 603.74 L510.50 604.07 L511.37 604.40 L512.25 604.73 L513.13 605.06 L514.01 605.39 L514.89 605.71 L515.77 606.04 L516.65 606.36 L517.53 606.68 L518.41 607.00 L519.28 607.32 L520.16 607.64 L521.04 607.96 L521.92 608.27 L522.80 608.59 L523.68 608.90 L524.56 609.21 L525.44 609.53 L526.31 609.84 L527.19 610.14 L528.07 610.45 L528.95 610.76 L529.83 611.06 L530.71 611.37 L531.59 611.67 L532.47 611.97 L533.34 612.27 L534.22 612.57 L535.10 612.87 L535.98 613.17 L536.86 613.46 L537.74 613.76 L538.62 614.05 L539.50 614.35 L540.37 614.64 L541.25 614.93 L542.13 615.22 L543.01 615.51 L543.89 615.80 L544.77 616.08 L545.65 616.37 L546.53 616.65 L547.40 616.94 L548.28 617.22 L549.16 617.50 L550.04 617.78 L550.92 618.06 L551.80 618.34 L552.68 618.62 L553.56 618.90 L554.44 619.17 L555.31 619.45 L556.19 619.72 L557.07 620.00 L557.95 620.27 L558.83 620.54 L559.71 620.81 L560.59 621.08 L561.47 621.35 L562.34 621.62 L563.22 621.88 L564.10 622.15 L564.98 622.42 L565.86 622.68 L566.74 622.94 L567.62 623.21 L568.50 623.47 L569.37 623.73 L570.25 623.99 L571.13 624.25 L572.01 624.51 L572.89 624.77 L573.77 625.02 L574.65 625.28 L575.53 625.53 L576.40 625.79 L577.28 626.04 L578.16 626.30 L579.04 626.55 L579.92 626.80 L580.80 627.05 L581.68 627.30 L582.56 627.55 L583.43 627.80 L584.31 628.04 L585.19 628.29 L586.07 628.54 L586.95 628.78" stroke-dashoffset="-43.58"/><path d="M878.08 150.32 L878.07 151.24 L878.06 152.16 L878.05 153.08 L878.05 154.00 L878.04 154.93 L878.03 155.85 L878.02 156.77 L878.01 157.69 L878.00 158.61 L877.99 159.53 L877.97 160.45 L877.96 161.37 L877.95 162.29 L877.94 163.22 L877.93 164.14 L877.92 165.06 L877.91 165.98 L877.90 166.90 L877.89 167.82 L877.88 168.74 L877.86 169.66 L877.85 170.58 L877.84 171.51 L877.83 172.43 L877.82 173.35 L877.80 174.27 L877.79 175.19 L877.78 176.11 L877.77 177.03 L877.75 177.95 L877.74 178.87 L877.73 179.79 L877.71 180.72 L877.70 181.64 L877.69 182.56 L877.67 183.48 L877.66 184.40 L877.64 185.32 L877.63 186.24 L877.62 187.16 L877.60 188.08 L877.59 189.01 L877.57 189.93 L877.56 190.85 L877.54 191.77 L877.53 192.69 L877.51 193.61 L877.49 194.53 L877.48 195.45 L877.46 196.37 L877.45 197.30 L877.43 198.22 L877.41 199.14 L877.39 200.06 L877.38 200.98 L877.36 201.90 L877.34 202.82 L877.33 203.74 L877.31 204.66 L877.29 205.59 L877.27 206.51 L877.25 207.43 L877.23 208.35 L877.21 209.27 L877.20 210.19 L877.18 211.11 L877.16 212.03 L877.14 212.95 L877.12 213.88 L877.10 214.80 L877.08 215.72 L877.05 216.64 L877.03 217.56 L877.01 218.48 L876.99 219.40 L876.97 220.32 L876.95 221.24 L876.93 222.16 L876.90 223.09 L876.88 224.01 L876.86 224.93 L876.83 225.85 L876.81 226.77 L876.79 227.69 L876.76 228.61 L876.74 229.53 L876.71 230.45 L876.69 231.38 L876.66 232.30 L876.64 233.22 L876.61 234.14 L876.59 235.06 L876.56 235.98 L876.53 236.90 L876.51 237.82 L876.48 238.74 L876.45 239.67 L876.42 240.59 L876.40 241.51 L876.37 242.43 L876.34 243.35 L876.31 244.27 L876.28 245.19 L876.25 246.11 L876.22 247.03 L876.19 247.96 L876.16 248.88 L876.13 249.80 L876.10 250.72 L876.06 251.64 L876.03 252.56 L876.00 253.48 L875.97 254.40 L875.93 255.32 L875.90 256.24 L875.86 257.17 L875.83 258.09 L875.79 259.01 L875.76 259.93 L875.72 260.85 L875.69 261.77 L875.65 262.69 L875.61 263.61 L875.58 264.53 L875.54 265.46 L875.50 266.38 L875.46 267.30 L875.42 268.22 L875.38 269.14 L875.34 270.06 L875.30 270.98 L875.26 271.90 L875.22 272.82 L875.18 273.75 L875.14 274.67 L875.09 275.59 L875.05 276.51 L875.01 277.43 L874.96 278.35 L874.92 279.27 L874.87 280.19 L874.83 281.11 L874.78 282.04 L874.73 282.96 L874.68 283.88 L874.64 284.80 L874.59 285.72 L874.54 286.64 L874.49 287.56 L874.44 288.48 L874.39 289.40 L874.34 290.33 L874.29 291.25 L874.23 292.17 L874.18 293.09 L874.13 294.01 L874.07 294.93 L874.02 295.85 L873.96 296.77 L873.90 297.69 L873.85 298.61 L873.79 299.54 L873.73 300.46 L873.67 301.38 L873.61 302.30 L873.55 303.22 L873.49 304.14 L873.43 305.06 L873.37 305.98 L873.31 306.90 L873.24 307.83 L873.18 308.75 L873.11 309.67 L873.05 310.59 L872.98 311.51 L872.91 312.43 L872.85 313.35 L872.78 314.27 L872.71 315.19 L872.64 316.12 L872.56 317.04 L872.49 317.96 L872.42 318.88 L872.35 319.80 L872.27 320.72 L872.20 321.64 L872.12 322.56 L872.04 323.48 L871.96 324.41 L871.89 325.33 L871.81 326.25 L871.72 327.17 L871.64 328.09 L871.56 329.01 L871.48 329.93 L871.39 330.85 L871.31 331.77 L871.22 332.69 L871.13 333.62 L871.04 334.54 L870.96 335.46 L870.86 336.38 L870.77 337.30 L870.68 338.22 L870.59 339.14 L870.49 340.06 L870.40 340.98 L870.30 341.91 L870.20 342.83 L870.10 343.75 L870.00 344.67 L869.90 345.59 L869.80 346.51 L869.70 347.43 L869.59 348.35 L869.49 349.27 L869.38 350.20 L869.27 351.12 L869.16 352.04 L869.05 352.96 L868.94 353.88 L868.82 354.80 L868.71 355.72 L868.59 356.64 L868.48 357.56 L868.36 358.49 L868.24 359.41 L868.12 360.33 L867.99 361.25 L867.87 362.17 L867.74 363.09 L867.62 364.01 L867.49 364.93 L867.36 365.85 L867.23 366.78 L867.09 367.70 L866.96 368.62 L866.82 369.54 L866.69 370.46 L866.55 371.38 L866.41 372.30 L866.26 373.22 L866.12 374.14 L865.98 375.06 L865.83 375.99 L865.68 376.91 L865.53 377.83 L865.38 378.75 L865.22 379.67 L865.07 380.59 L864.91 381.51 L864.75 382.43 L864.59 383.35 L864.43 384.28 L864.26 385.20 L864.10 386.12 L863.93 387.04 L863.76 387.96 L863.58 388.88 L863.41 389.80 L863.23 390.72 L863.05 391.64 L862.87 392.57 L862.69 393.49 L862.51 394.41 L862.32 395.33 L862.13 396.25 L861.94 397.17 L861.75 398.09 L861.55 399.01 L861.36 399.93 L861.16 400.86 L860.95 401.78 L860.75 402.70 L860.54 403.62 L860.33 404.54 L860.12 405.46 L859.91 406.38 L859.69 407.30 L859.47 408.22 L859.25 409.15 L859.03 410.07 L858.80 410.99 L858.58 411.91 L858.34 412.83 L858.11 413.75 L857.87 414.67 L857.63 415.59 L857.39 416.51 L857.15 417.43 L856.90 418.36 L856.65 419.28 L856.40 420.20 L856.14 421.12 L855.88 422.04 L855.62 422.96 L855.35 423.88 L855.09 424.80 L854.81 425.72 L854.54 426.65 L854.26 427.57 L853.98 428.49 L853.70 429.41 L853.41 430.33 L853.12 431.25 L852.83 432.17 L852.53 433.09 L852.23 434.01 L851.93 434.94 L851.62 435.86 L851.31 436.78 L851.00 437.70 L850.68 438.62 L850.36 439.54 L850.03 440.46 L849.70 441.38 L848.83 443.80 L847.95 446.14 L847.07 448.42 L846.19 450.64 L845.31 452.79 L844.43 454.90 L843.55 456.94 L842.67 458.94 L841.80 460.89 L840.92 462.80 L840.04 464.66 L839.16 466.48 L838.28 468.26 L837.40 470.00 L836.52 471.71 L835.64 473.38 L834.77 475.02 L833.89 476.62 L833.01 478.19 L832.13 479.74 L831.25 481.25 L830.37 482.74 L829.49 484.20 L828.61 485.63 L827.74 487.04 L826.86 488.43 L825.98 489.79 L825.10 491.13 L824.22 492.45 L823.34 493.75 L822.46 495.03 L821.58 496.29 L820.71 497.52 L819.83 498.74 L818.95 499.94 L818.07 501.13 L817.19 502.30 L816.31 503.45 L815.43 504.58 L814.55 505.70 L813.68 506.81 L812.80 507.89 L811.92 508.97 L811.04 510.03 L810.16 511.08 L809.28 512.11 L808.40 513.13 L807.52 514.14 L806.64 515.14 L805.77 516.12 L804.89 517.09 L804.01 518.05 L803.13 519.00 L802.25 519.94 L801.37 520.87 L800.49 521.79 L799.61 522.69 L798.74 523.59 L797.86 524.48 L796.98 525.36 L796.10 526.22 L795.22 527.08 L794.34 527.93 L793.46 528.77 L792.58 529.61 L791.71 530.43 L790.83 531.25 L789.95 532.06 L789.07 532.86 L788.19 533.65 L787.31 534.43 L786.43 535.21 L785.55 535.98 L784.68 536.74 L783.80 537.50 L782.92 538.25 L782.04 538.99 L781.16 539.72 L780.28 540.45 L779.40 541.17 L778.52 541.89 L777.65 542.60 L776.77 543.30 L775.89 544.00 L775.01 544.69 L774.13 545.38 L773.25 546.06 L772.37 546.73 L771.49 547.40 L770.61 548.06 L769.74 548.72 L768.86 549.37 L767.98 550.02 L767.10 550.66 L766.22 551.30 L765.34 551.93 L764.46 552.56 L763.58 553.18 L762.71 553.80 L761.83 554.41 L760.95 555.02 L760.07 555.63 L759.19 556.23 L758.31 556.82 L757.43 557.41 L756.55 558.00 L755.68 558.58 L754.80 559.16 L753.92 559.73 L753.04 560.30 L752.16 560.87 L751.28 561.43 L750.40 561.99 L749.52 562.55 L748.65 563.10 L747.77 563.64 L746.89 564.19 L746.01 564.73 L745.13 565.26 L744.25 565.80 L743.37 566.33 L742.49 566.85 L741.62 567.37 L740.74 567.89 L739.86 568.41 L738.98 568.92 L738.10 569.43 L737.22 569.94 L736.34 570.44 L735.46 570.94 L734.58 571.44 L733.71 571.93 L732.83 572.42 L731.95 572.91 L731.07 573.40 L730.19 573.88 L729.31 574.36 L728.43 574.84 L727.55 575.31 L726.68 575.78 L725.80 576.25 L724.92 576.72 L724.04 577.18 L723.16 577.64 L722.28 578.10 L721.40 578.55 L720.52 579.01 L719.65 579.46 L718.77 579.90 L717.89 580.35 L717.01 580.79 L716.13 581.23 L715.25 581.67 L714.37 582.11 L713.49 582.54 L712.62 582.97 L711.74 583.40 L710.86 583.83 L709.98 584.25 L709.10 584.67 L708.22 585.09 L707.34 585.51 L706.46 585.93 L705.59 586.34 L704.71 586.75 L703.83 587.16 L702.95 587.57 L702.07 587.98 L701.19 588.38 L700.31 588.78 L699.43 589.18 L698.55 589.58 L697.68 589.97 L696.80 590.37 L695.92 590.76 L695.04 591.15 L694.16 591.54 L693.28 591.92 L692.40 592.31 L691.52 592.69 L690.65 593.07 L689.77 593.45 L688.89 593.83 L688.01 594.20 L687.13 594.58 L686.25 594.95 L685.37 595.32 L684.49 595.69 L683.62 596.06 L682.74 596.42 L681.86 596.78 L680.98 597.15 L680.10 597.51 L679.22 597.87 L678.34 598.22 L677.46 598.58 L676.59 598.93 L675.71 599.29 L674.83 599.64 L673.95 599.99 L673.07 600.34 L672.19 600.68 L671.31 601.03 L670.43 601.37 L669.56 601.71 L668.68 602.05 L667.80 602.39 L666.92 602.73 L666.04 603.07 L665.16 603.40 L664.28 603.74 L663.40 604.07 L662.53 604.40 L661.65 604.73 L660.77 605.06 L659.89 605.39 L659.01 605.71 L658.13 606.04 L657.25 606.36 L656.37 606.68 L655.49 607.00 L654.62 607.32 L653.74 607.64 L652.86 607.96 L651.98 608.27 L651.10 608.59 L650.22 608.90 L649.34 609.21 L648.46 609.53 L647.59 609.84 L646.71 610.14 L645.83 610.45 L644.95 610.76 L644.07 611.06 L643.19 611.37 L642.31 611.67 L641.43 611.97 L640.56 612.27 L639.68 612.57 L638.80 612.87 L637.92 613.17 L637.04 613.46 L636.16 613.76 L635.28 614.05 L634.40 614.35 L633.53 614.64 L632.65 614.93 L631.77 615.22 L630.89 615.51 L630.01 615.80 L629.13 616.08 L628.25 616.37 L627.37 616.65 L626.50 616.94 L625.62 617.22 L624.74 617.50 L623.86 617.78 L622.98 618.06 L622.10 618.34 L621.22 618.62 L620.34 618.90 L619.46 619.17 L618.59 619.45 L617.71 619.72 L616.83 620.00 L615.95 620.27 L615.07 620.54 L614.19 620.81 L613.31 621.08 L612.43 621.35 L611.56 621.62 L610.68 621.88 L609.80 622.15 L608.92 622.42 L608.04 622.68 L607.16 622.94 L606.28 623.21 L605.40 623.47 L604.53 623.73 L603.65 623.99 L602.77 624.25 L601.89 624.51 L601.01 624.77 L600.13 625.02 L599.25 625.28 L598.37 625.53 L597.50 625.79 L596.62 626.04 L595.74 626.30 L594.86 626.55 L593.98 626.80 L593.10 627.05 L592.22 627.30 L591.34 627.55 L590.47 627.80 L589.59 628.04 L588.71 628.29 L587.83 628.54 L586.95 628.78" stroke-dashoffset="-38.48"/></g></g></svg>
<svg class="a" style="left:0;top:0" width="965" height="692" viewBox="0 0 965 692" font-family="Liberation Sans">
<path d="M295.5 172.5V624.5H879" fill="none" stroke="#262626" stroke-width="1"/>
<path d="M353.39 624V618 M411.78 624V618 M470.17 624V618 M528.56 624V618 M586.95 624V618 M645.34 624V618 M703.73 624V618 M762.12 624V618 M820.51 624V618 M878.90 624V618 M296 612.66H298.20 M296 594.50H298.20 M296 579.66H298.20 M296 567.11H298.20 M296 556.24H298.20 M296 546.66H298.20 M296 538.08H301.50 M296 481.67H298.20 M296 448.67H298.20 M296 425.26H298.20 M296 407.10H298.20 M296 392.26H298.20 M296 379.71H298.20 M296 368.84H298.20 M296 359.26H298.20 M296 350.68H301.50 M296 294.27H298.20 M296 261.27H298.20 M296 237.86H298.20 M296 219.70H298.20 M296 204.86H298.20 M296 192.31H298.20 M296 181.44H298.20" stroke="#262626" stroke-width="1" fill="none"/>
<text x="353.39" y="640" text-anchor="middle" font-size="12" fill="#262626">0.1</text>
<text x="411.78" y="640" text-anchor="middle" font-size="12" fill="#262626">0.2</text>
<text x="470.17" y="640" text-anchor="middle" font-size="12" fill="#262626">0.3</text>
<text x="528.56" y="640" text-anchor="middle" font-size="12" fill="#262626">0.4</text>
<text x="586.95" y="640" text-anchor="middle" font-size="12" fill="#262626">0.5</text>
<text x="645.34" y="640" text-anchor="middle" font-size="12" fill="#262626">0.6</text>
<text x="703.73" y="640" text-anchor="middle" font-size="12" fill="#262626">0.7</text>
<text x="762.12" y="640" text-anchor="middle" font-size="12" fill="#262626">0.8</text>
<text x="820.51" y="640" text-anchor="middle" font-size="12" fill="#262626">0.9</text>
<text x="878.90" y="640" text-anchor="middle" font-size="12" fill="#262626">1</text>
<text x="285.6" y="542.28" text-anchor="end" font-size="12" fill="#262626">10</text>
<text x="286" y="536.48" font-size="8" fill="#262626">1</text>
<text x="285.6" y="354.88" text-anchor="end" font-size="12" fill="#262626">10</text>
<text x="286" y="349.08" font-size="8" fill="#262626">2</text>
<text x="587" y="656" text-anchor="middle" font-size="13.2" fill="#262626">Time (secs)</text>
<text transform="translate(263.5 399.5) rotate(-90)" text-anchor="middle" font-size="13.2" fill="#262626">Frequency (Hz)</text>
<defs><linearGradient id="cbg" x1="0" y1="1" x2="0" y2="0">
<stop offset="0.0000" stop-color="#3e26a8"/>
<stop offset="0.0159" stop-color="#402ab4"/>
<stop offset="0.0317" stop-color="#422ec0"/>
<stop offset="0.0476" stop-color="#4332cb"/>
<stop offset="0.0635" stop-color="#4537d5"/>
<stop offset="0.0794" stop-color="#463cde"/>
<stop offset="0.0952" stop-color="#4741e5"/>
<stop offset="0.1111" stop-color="#4747eb"/>
<stop offset="0.1270" stop-color="#484df0"/>
<stop offset="0.1429" stop-color="#4852f4"/>
<stop offset="0.1587" stop-color="#4758f8"/>
<stop offset="0.1746" stop-color="#465efb"/>
<stop offset="0.1905" stop-color="#4563fd"/>
<stop offset="0.2063" stop-color="#4269fe"/>
<stop offset="0.2222" stop-color="#3e6fff"/>
<stop offset="0.2381" stop-color="#3875fe"/>
<stop offset="0.2540" stop-color="#327cfc"/>
<stop offset="0.2698" stop-color="#2f81fa"/>
<stop offset="0.2857" stop-color="#2e87f7"/>
<stop offset="0.3016" stop-color="#2d8cf3"/>
<stop offset="0.3175" stop-color="#2b91ef"/>
<stop offset="0.3333" stop-color="#2797eb"/>
<stop offset="0.3492" stop-color="#259be8"/>
<stop offset="0.3651" stop-color="#23a0e5"/>
<stop offset="0.3810" stop-color="#20a5e3"/>
<stop offset="0.3968" stop-color="#1ca9df"/>
<stop offset="0.4127" stop-color="#18addb"/>
<stop offset="0.4286" stop-color="#12b1d6"/>
<stop offset="0.4444" stop-color="#08b5d0"/>
<stop offset="0.4603" stop-color="#01b8ca"/>
<stop offset="0.4762" stop-color="#02bac3"/>
<stop offset="0.4921" stop-color="#0bbdbd"/>
<stop offset="0.5079" stop-color="#19bfb6"/>
<stop offset="0.5238" stop-color="#24c1ae"/>
<stop offset="0.5397" stop-color="#2cc4a7"/>
<stop offset="0.5556" stop-color="#31c69f"/>
<stop offset="0.5714" stop-color="#37c897"/>
<stop offset="0.5873" stop-color="#3fca8e"/>
<stop offset="0.6032" stop-color="#4acb84"/>
<stop offset="0.6190" stop-color="#57cc7a"/>
<stop offset="0.6349" stop-color="#64cd6f"/>
<stop offset="0.6508" stop-color="#72cd64"/>
<stop offset="0.6667" stop-color="#81cc59"/>
<stop offset="0.6825" stop-color="#8fcb4e"/>
<stop offset="0.6984" stop-color="#9dc943"/>
<stop offset="0.7143" stop-color="#abc739"/>
<stop offset="0.7302" stop-color="#b9c431"/>
<stop offset="0.7460" stop-color="#c5c22a"/>
<stop offset="0.7619" stop-color="#d1bf27"/>
<stop offset="0.7778" stop-color="#dcbd29"/>
<stop offset="0.7937" stop-color="#e6bb2d"/>
<stop offset="0.8095" stop-color="#f0ba36"/>
<stop offset="0.8254" stop-color="#f8ba3d"/>
<stop offset="0.8413" stop-color="#febe3c"/>
<stop offset="0.8571" stop-color="#fec338"/>
<stop offset="0.8730" stop-color="#fec934"/>
<stop offset="0.8889" stop-color="#fccf30"/>
<stop offset="0.9048" stop-color="#fad62d"/>
<stop offset="0.9206" stop-color="#f7dc2a"/>
<stop offset="0.9365" stop-color="#f5e327"/>
<stop offset="0.9524" stop-color="#f5e924"/>
<stop offset="0.9683" stop-color="#f6ef20"/>
<stop offset="0.9841" stop-color="#f7f51b"/>
<stop offset="1.0000" stop-color="#f9fb15"/>
</linearGradient></defs>
<rect x="898.5" y="172.5" width="20" height="452" fill="url(#cbg)" stroke="#262626" stroke-width="1"/>
<text x="924" y="578.30" font-size="11" fill="#262626">0.1</text>
<text x="924" y="530.30" font-size="11" fill="#262626">0.2</text>
<text x="924" y="482.30" font-size="11" fill="#262626">0.3</text>
<text x="924" y="434.30" font-size="11" fill="#262626">0.4</text>
<text x="924" y="386.30" font-size="11" fill="#262626">0.5</text>
<text x="924" y="338.30" font-size="11" fill="#262626">0.6</text>
<text x="924" y="290.30" font-size="11" fill="#262626">0.7</text>
<text x="924" y="242.30" font-size="11" fill="#262626">0.8</text>
<text x="924" y="194.30" font-size="11" fill="#262626">0.9</text>
<path d="M918 574.30H914 M918 526.30H914 M918 478.30H914 M918 430.30H914 M918 382.30H914 M918 334.30H914 M918 286.30H914 M918 238.30H914 M918 190.30H914" stroke="#262626" stroke-width="1"/>
<text transform="translate(955 398.5) rotate(-90)" text-anchor="middle" font-size="11" fill="#262626">Magnitude</text>
</svg>

<!-- status bar -->
<div class="a" style="left:0;top:668px;width:241px;height:1px;background:#fdfdfd"></div>
<div class="a" style="left:0;top:669px;width:965px;height:1px;background:#a0a0a0"></div>
<div class="a" style="left:242px;top:669px;width:723px;height:1px;background:#7a7a7a"></div>
<div class="a" style="left:0;top:670px;width:965px;height:22px;background:#e4e4e4"></div>
<div class="a" style="left:241px;top:668px;width:1px;height:24px;background:#7a7a7a"></div>
<svg class="a" style="left:5px;top:675px" width="13" height="12" viewBox="0 0 13 12"><rect x="1" y="1" width="2" height="10" fill="#979797"/><path d="M11 1v10l-6-5z" fill="#979797"/></svg>
</body></html>
